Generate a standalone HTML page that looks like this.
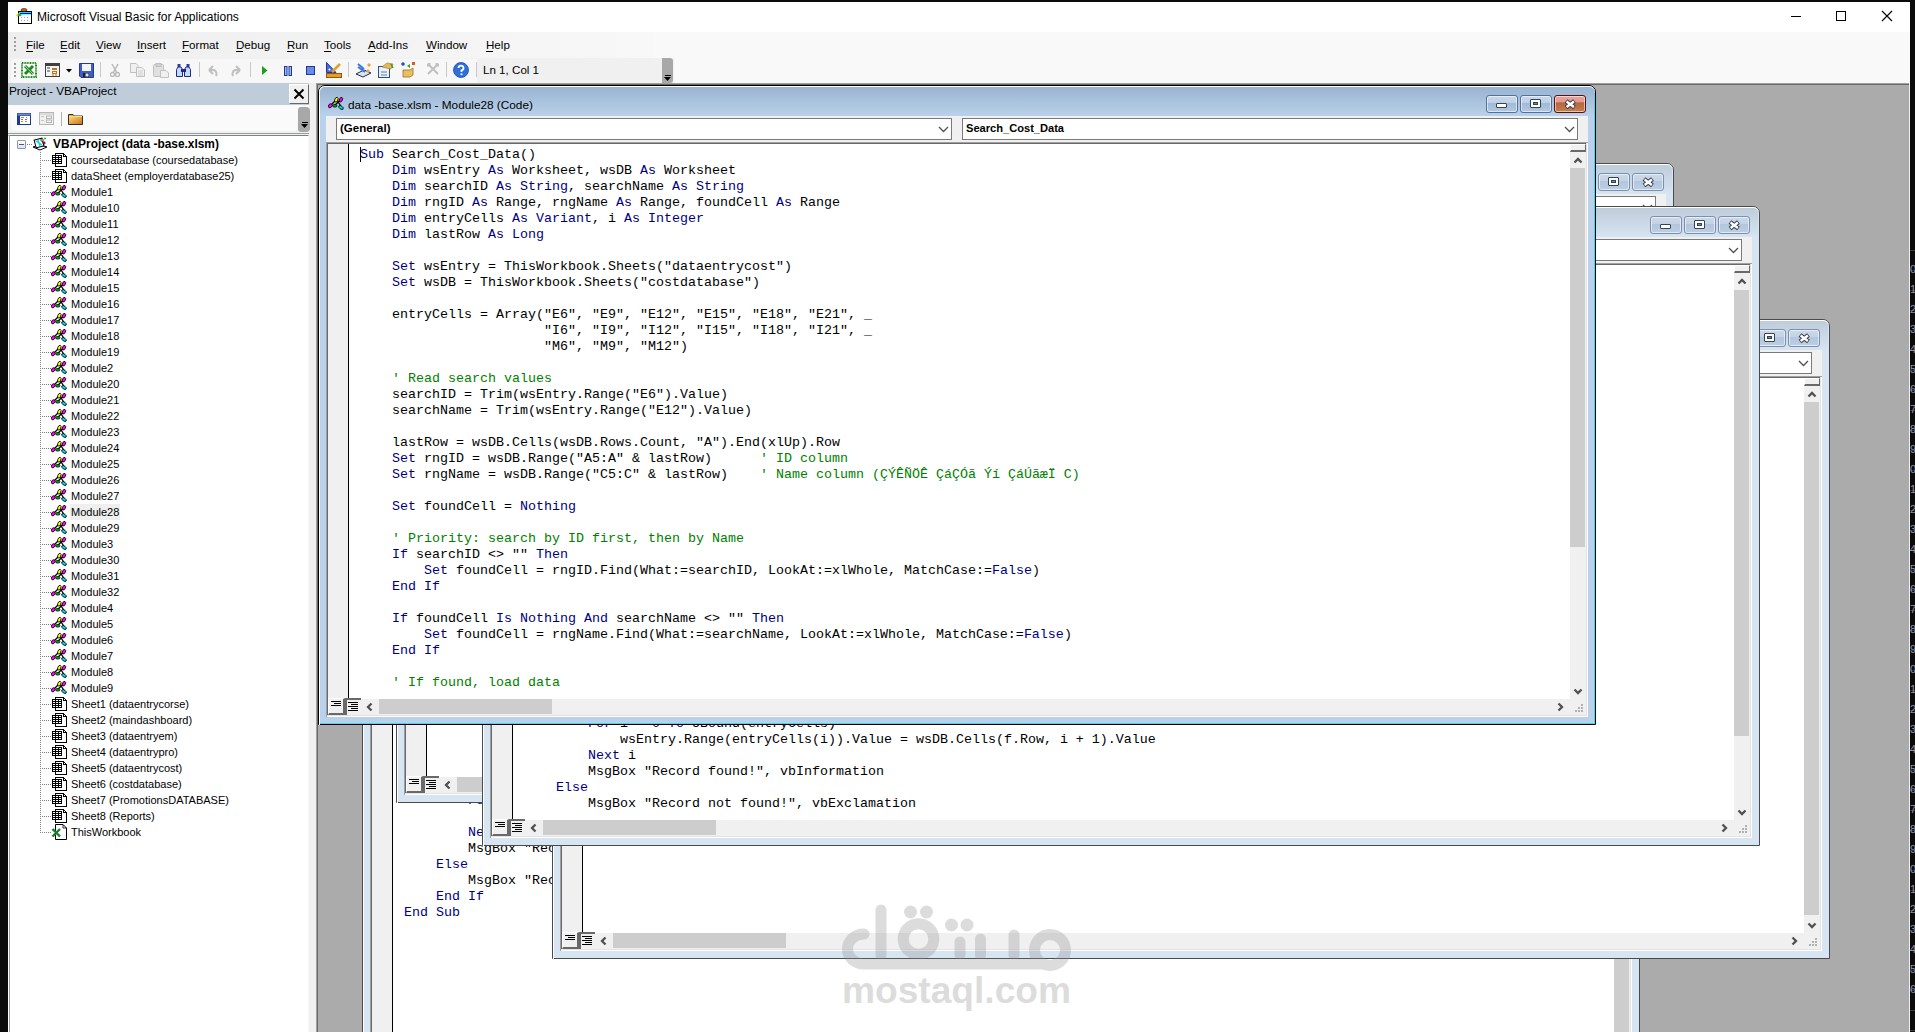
<!DOCTYPE html><html><head><meta charset="utf-8"><style>*{box-sizing:border-box}body{margin:0;width:1915px;height:1032px;overflow:hidden;position:relative;background:#0b0b0b;font-family:"Liberation Sans",sans-serif}div{box-sizing:border-box}</style></head><body><div style="position:absolute;left:8px;top:2px;width:1902px;height:30px;background:#fff"></div><div style="position:absolute;left:37px;top:10px;height:14px;font-family:'Liberation Sans', sans-serif;font-size:12px;font-weight:400;line-height:14px;color:#000;white-space:pre;">Microsoft Visual Basic for Applications</div><svg style="position:absolute;left:16px;top:8px" width="16" height="16"><rect x="2.5" y="3.5" width="13" height="12" fill="#fff" stroke="#000"/><rect x="3" y="4" width="12" height="2.5" fill="#00e8ff"/><path d="M3 5.5H15" stroke="#0000c0"/><g fill="#a0a0a0"><rect x="5" y="9" width="1" height="1"/><rect x="8" y="9" width="1" height="1"/><rect x="11" y="9" width="1" height="1"/><rect x="5" y="12" width="1" height="1"/><rect x="8" y="12" width="1" height="1"/><rect x="11" y="12" width="1" height="1"/></g><ellipse cx="8" cy="2" rx="3" ry="1.6" fill="#c06010" stroke="#000" stroke-width="0.5"/><path d="M0.5 8L4 5.5" stroke="#e8e000" stroke-width="2"/><ellipse cx="3.5" cy="7" rx="2" ry="1.2" fill="#40a040"/></svg><div style="position:absolute;left:1791px;top:16px;width:10px;height:1px;background:#000"></div><div style="position:absolute;left:1836px;top:11px;width:10px;height:10px;border:1px solid #000"></div><svg style="position:absolute;left:1881px;top:10px" width="12" height="12"><path d="M1 1L11 11M11 1L1 11" stroke="#000" stroke-width="1.1"/></svg><div style="position:absolute;left:8px;top:32px;width:1902px;height:51px;background:#f9f9f9"></div><div style="position:absolute;left:8px;top:32px;width:645px;height:26px;background:linear-gradient(90deg,#eeeeee,#f3f3f3 60%,#f8f8f8)"></div><div style="position:absolute;left:8px;top:58px;width:666px;height:25px;background:#f0f0f0"></div><div style="position:absolute;left:11px;top:59px;width:651px;height:24px;background:#f7f7f7;border-radius:3px"></div><div style="position:absolute;left:14px;top:37px;width:2px;height:2px;background:#a0a0a0"></div><div style="position:absolute;left:14px;top:41px;width:2px;height:2px;background:#a0a0a0"></div><div style="position:absolute;left:14px;top:45px;width:2px;height:2px;background:#a0a0a0"></div><div style="position:absolute;left:14px;top:49px;width:2px;height:2px;background:#a0a0a0"></div><div style="position:absolute;left:14px;top:63px;width:2px;height:2px;background:#a0a0a0"></div><div style="position:absolute;left:14px;top:67px;width:2px;height:2px;background:#a0a0a0"></div><div style="position:absolute;left:14px;top:71px;width:2px;height:2px;background:#a0a0a0"></div><div style="position:absolute;left:14px;top:75px;width:2px;height:2px;background:#a0a0a0"></div><div style="position:absolute;left:477px;top:59px;width:185px;height:24px;background:#f0f0f0"></div><div style="position:absolute;left:483px;top:63px;height:14px;font-family:'Liberation Sans', sans-serif;font-size:11.6px;font-weight:400;line-height:14px;color:#000;white-space:pre;">Ln 1, Col 1</div><div style="position:absolute;left:662px;top:58px;width:11px;height:25px;background:#a8a8a8;border-radius:0 3px 3px 0"></div><div style="position:absolute;left:665px;top:75px;width:6px;height:1px;background:#000"></div><svg style="position:absolute;left:664px;top:77px" width="8" height="5"><path d="M0 0H7L3.5 4Z" fill="#000"/></svg><div style="position:absolute;left:26px;top:38px;height:14px;font-family:'Liberation Sans', sans-serif;font-size:11.6px;font-weight:400;line-height:14px;color:#000;white-space:pre;">File</div><div style="position:absolute;left:26px;top:51px;width:7px;height:1px;background:#000"></div><div style="position:absolute;left:60px;top:38px;height:14px;font-family:'Liberation Sans', sans-serif;font-size:11.6px;font-weight:400;line-height:14px;color:#000;white-space:pre;">Edit</div><div style="position:absolute;left:60px;top:51px;width:7px;height:1px;background:#000"></div><div style="position:absolute;left:96px;top:38px;height:14px;font-family:'Liberation Sans', sans-serif;font-size:11.6px;font-weight:400;line-height:14px;color:#000;white-space:pre;">View</div><div style="position:absolute;left:96px;top:51px;width:7px;height:1px;background:#000"></div><div style="position:absolute;left:137px;top:38px;height:14px;font-family:'Liberation Sans', sans-serif;font-size:11.6px;font-weight:400;line-height:14px;color:#000;white-space:pre;">Insert</div><div style="position:absolute;left:137px;top:51px;width:7px;height:1px;background:#000"></div><div style="position:absolute;left:182px;top:38px;height:14px;font-family:'Liberation Sans', sans-serif;font-size:11.6px;font-weight:400;line-height:14px;color:#000;white-space:pre;">Format</div><div style="position:absolute;left:182px;top:51px;width:7px;height:1px;background:#000"></div><div style="position:absolute;left:236px;top:38px;height:14px;font-family:'Liberation Sans', sans-serif;font-size:11.6px;font-weight:400;line-height:14px;color:#000;white-space:pre;">Debug</div><div style="position:absolute;left:236px;top:51px;width:7px;height:1px;background:#000"></div><div style="position:absolute;left:287px;top:38px;height:14px;font-family:'Liberation Sans', sans-serif;font-size:11.6px;font-weight:400;line-height:14px;color:#000;white-space:pre;">Run</div><div style="position:absolute;left:287px;top:51px;width:7px;height:1px;background:#000"></div><div style="position:absolute;left:324px;top:38px;height:14px;font-family:'Liberation Sans', sans-serif;font-size:11.6px;font-weight:400;line-height:14px;color:#000;white-space:pre;">Tools</div><div style="position:absolute;left:324px;top:51px;width:7px;height:1px;background:#000"></div><div style="position:absolute;left:368px;top:38px;height:14px;font-family:'Liberation Sans', sans-serif;font-size:11.6px;font-weight:400;line-height:14px;color:#000;white-space:pre;">Add-Ins</div><div style="position:absolute;left:368px;top:51px;width:7px;height:1px;background:#000"></div><div style="position:absolute;left:426px;top:38px;height:14px;font-family:'Liberation Sans', sans-serif;font-size:11.6px;font-weight:400;line-height:14px;color:#000;white-space:pre;">Window</div><div style="position:absolute;left:426px;top:51px;width:7px;height:1px;background:#000"></div><div style="position:absolute;left:486px;top:38px;height:14px;font-family:'Liberation Sans', sans-serif;font-size:11.6px;font-weight:400;line-height:14px;color:#000;white-space:pre;">Help</div><div style="position:absolute;left:486px;top:51px;width:7px;height:1px;background:#000"></div><svg style="position:absolute;left:21px;top:62px" width="16" height="16" viewBox="0 0 16 16"><rect x="1" y="1" width="14" height="14" fill="#fff" stroke="#1a8a1a" stroke-width="2" stroke-dasharray="1 0.6"/><path d="M4 4L12 12M12 4L4 12" stroke="#1a8a1a" stroke-width="3"/><path d="M4 4L12 12" stroke="#c8f0c8" stroke-width="0.8"/></svg><svg style="position:absolute;left:45px;top:63px" width="15" height="14" viewBox="0 0 15 14"><rect x="0.5" y="0.5" width="14" height="13" fill="#f4f4f4" stroke="#404040"/><rect x="1" y="1" width="13" height="2" fill="#404040"/><path d="M2 5H5M2 8H5" stroke="#404040"/><rect x="7" y="5" width="5" height="2" fill="#d07010"/><rect x="7.5" y="8.5" width="4" height="2" fill="none" stroke="#d07010"/><path d="M7 12H9M10 12H12" stroke="#d07010"/></svg><svg style="position:absolute;left:66px;top:69px" width="6" height="4" viewBox="0 0 6 4"><path d="M0 0H6L3 3.5Z" fill="#000"/></svg><svg style="position:absolute;left:79px;top:63px" width="15" height="15" viewBox="0 0 15 15"><path d="M0.5 0.5H14.5V14.5H2L0.5 13Z" fill="#3c5cc8" stroke="#2a3a8a"/><rect x="3" y="1" width="9" height="7" fill="#f0f4ff"/><rect x="4" y="10" width="6" height="4" fill="#202020"/><rect x="6.5" y="10.5" width="3" height="3" fill="#e0e0e0"/></svg><div style="position:absolute;left:100px;top:62px;width:1px;height:15px;background:#c8c8c8"></div><div style="position:absolute;left:199px;top:62px;width:1px;height:15px;background:#c8c8c8"></div><div style="position:absolute;left:250px;top:62px;width:1px;height:15px;background:#c8c8c8"></div><div style="position:absolute;left:348px;top:62px;width:1px;height:15px;background:#c8c8c8"></div><div style="position:absolute;left:446px;top:62px;width:1px;height:15px;background:#c8c8c8"></div><div style="position:absolute;left:476px;top:62px;width:1px;height:15px;background:#c8c8c8"></div><svg style="position:absolute;left:110px;top:63px" width="10" height="14" viewBox="0 0 10 14"><path d="M2 1L7 10M8 1L3 10" stroke="#b8b8b8" stroke-width="1.5"/><circle cx="2.5" cy="11.5" r="2" fill="none" stroke="#b8b8b8" stroke-width="1.3"/><circle cx="7.5" cy="11.5" r="2" fill="none" stroke="#b8b8b8" stroke-width="1.3"/></svg><svg style="position:absolute;left:130px;top:63px" width="15" height="14" viewBox="0 0 15 14"><path d="M0.5 0.5H6L8 2.5V9.5H0.5Z" fill="#f0f0f0" stroke="#c0c0c0"/><path d="M6.5 4.5H12L14.5 7V13.5H6.5Z" fill="#f0f0f0" stroke="#c0c0c0"/><path d="M8 8H13M8 10H13M8 12H13" stroke="#d0d0d0"/></svg><svg style="position:absolute;left:153px;top:63px" width="16" height="15" viewBox="0 0 16 15"><rect x="0.5" y="1.5" width="10" height="12" rx="1" fill="#e0e0e0" stroke="#c0c0c0"/><rect x="3" y="0.5" width="5" height="3" fill="#d0d0d0" stroke="#c0c0c0"/><path d="M7.5 7.5H13L15.5 10V14.5H7.5Z" fill="#f0f0f0" stroke="#c0c0c0"/></svg><svg style="position:absolute;left:176px;top:63px" width="15" height="14" viewBox="0 0 15 14"><rect x="1.5" y="1" width="3" height="3" fill="#3040a0"/><rect x="10.5" y="1" width="3" height="3" fill="#3040a0"/><path d="M0.5 6.5L2 4H5L6.5 6.5V13.5H0.5Z" fill="#c8d8f8" stroke="#1a2a8a"/><path d="M8.5 6.5L10 4H13L14.5 6.5V13.5H8.5Z" fill="#c8d8f8" stroke="#1a2a8a"/><rect x="5" y="6" width="5" height="3" fill="#1a2a8a"/></svg><svg style="position:absolute;left:207px;top:63px" width="13" height="14" viewBox="0 0 13 14"><path d="M2 7L6 11M2 7L6 3M2 7H7A4.5 4.5 0 0 1 9 13" stroke="#c0c0c0" stroke-width="2.2" fill="none"/></svg><svg style="position:absolute;left:229px;top:63px" width="13" height="14" viewBox="0 0 13 14"><path d="M11 7L7 11M11 7L7 3M11 7H6A4.5 4.5 0 0 0 4 13" stroke="#c0c0c0" stroke-width="2.2" fill="none"/></svg><svg style="position:absolute;left:262px;top:66px" width="6" height="9" viewBox="0 0 6 9"><path d="M0 0L5.5 4.5L0 9Z" fill="#18a018"/></svg><svg style="position:absolute;left:284px;top:66px" width="8" height="10" viewBox="0 0 8 10"><rect x="0.5" y="0.5" width="2.5" height="9" fill="#a0b8f0" stroke="#1a3aa0"/><rect x="5" y="0.5" width="2.5" height="9" fill="#a0b8f0" stroke="#1a3aa0"/></svg><svg style="position:absolute;left:306px;top:66px" width="9" height="9" viewBox="0 0 9 9"><rect x="0.5" y="0.5" width="8" height="8" fill="#6a8ae8" stroke="#1a3aa0"/></svg><svg style="position:absolute;left:326px;top:62px" width="16" height="16" viewBox="0 0 16 16"><path d="M0.5 0.5L10 10.5H0.5Z" fill="#4a6ad8" stroke="#1a3aa0"/><circle cx="3.5" cy="7.5" r="1" fill="#fff"/><path d="M6 10L14 2" stroke="#e0a030" stroke-width="2.5"/><rect x="0.5" y="11.5" width="15" height="4" fill="#e0a020" stroke="#a05010"/></svg><svg style="position:absolute;left:355px;top:62px" width="17" height="17" viewBox="0 0 17 17"><path d="M1 12L8 15L16 11L9 8Z" fill="#d8e4f4" stroke="#203050"/><path d="M3 2L9 7M3 5L10 10" stroke="#3a7ad8" stroke-width="2"/><path d="M14 1L16 3L14 5L12 3ZM13 7L15 9L13 11L11 9Z" fill="#f0a040"/></svg><svg style="position:absolute;left:378px;top:62px" width="16" height="16" viewBox="0 0 16 16"><rect x="0.5" y="4.5" width="11" height="11" fill="#e8f0fa" stroke="#305080"/><path d="M3 10H9M3 13H9" stroke="#6080b0"/><path d="M4 5L9 1L15 2L13 7Z" fill="#e8b850" stroke="#a07020" stroke-width="0.6"/><path d="M13 2L15 6" stroke="#30a030" stroke-width="1.5"/></svg><svg style="position:absolute;left:401px;top:62px" width="16" height="16" viewBox="0 0 16 16"><circle cx="2" cy="2" r="1.8" fill="#2050c0"/><path d="M6 4L9 2V6Z" fill="#30a030"/><rect x="11" y="0" width="3" height="3" fill="#d06020"/><path d="M2 8L9 8L12 6V13L9 15H2Z" fill="#e8c060" stroke="#a07020" stroke-width="0.8"/></svg><svg style="position:absolute;left:427px;top:63px" width="12" height="12" viewBox="0 0 12 12"><path d="M1 11L10 2M2 2L11 11" stroke="#c0c0c0" stroke-width="2"/><path d="M0 3L3 0M9 0L12 3" stroke="#c0c0c0" stroke-width="2.5"/></svg><svg style="position:absolute;left:453px;top:62px" width="16" height="16" viewBox="0 0 16 16"><circle cx="8" cy="8" r="7.5" fill="#2f6fd8" stroke="#1a4aa8" stroke-width="0.8"/><path d="M5.5 6A2.5 2.5 0 1 1 8.5 8.5V10" stroke="#fff" stroke-width="1.8" fill="none"/><circle cx="8.5" cy="12.3" r="1" fill="#fff"/></svg><div style="position:absolute;left:309px;top:83px;width:7px;height:949px;background:#f0f0f0"></div><div style="position:absolute;left:316px;top:83px;width:1594px;height:949px;background:#ababab"></div><div style="position:absolute;left:316px;top:83px;width:1594px;height:1px;background:#a0a0a0"></div><div style="position:absolute;left:316px;top:84px;width:1594px;height:1px;background:#696969"></div><div style="position:absolute;left:316px;top:83px;width:1px;height:949px;background:#a0a0a0"></div><div style="position:absolute;left:317px;top:84px;width:1px;height:948px;background:#696969"></div><div style="position:absolute;left:8px;top:83px;width:304px;height:949px;background:#f0f0f0"></div><div style="position:absolute;left:8px;top:83px;width:301px;height:22px;background:#bfcddb"></div><div style="position:absolute;left:9px;top:84px;height:14px;font-family:'Liberation Sans', sans-serif;font-size:11.8px;font-weight:400;line-height:14px;color:#000;white-space:pre;">Project - VBAProject</div><div style="position:absolute;left:289px;top:84px;width:20px;height:20px;background:#f0f0f0;border:1px solid;border-color:#fff #696969 #696969 #fff"></div><svg style="position:absolute;left:293px;top:88px" width="12" height="12"><path d="M1.5 1.5L10.5 10.5M10.5 1.5L1.5 10.5" stroke="#000" stroke-width="2"/></svg><div style="position:absolute;left:8px;top:105px;width:301px;height:27px;background:linear-gradient(#fbfbfb,#f0f0f0)"></div><div style="position:absolute;left:11px;top:107px;width:286px;height:24px;background:#fafafa;border-radius:3px"></div><div style="position:absolute;left:298px;top:107px;width:12px;height:25px;background:#a8a8a8;border-radius:3px 4px 4px 3px"></div><div style="position:absolute;left:302px;top:122px;width:6px;height:1px;background:#000"></div><svg style="position:absolute;left:301px;top:124px" width="8" height="5"><path d="M0 0H7L3.5 4Z" fill="#000"/></svg><svg style="position:absolute;left:17px;top:113px" width="14" height="12" viewBox="0 0 14 12"><rect x="0" y="0" width="14" height="12" fill="#1a3a8a"/><rect x="0.5" y="0.5" width="13" height="2" fill="#6a8ae8"/><rect x="3" y="3" width="10" height="8" fill="#fff"/><path d="M4 4.5H7M9 4.5H10M4 8.5H6M8 8.5H10" stroke="#e08020" stroke-width="1"/><path d="M4 6.5H6M8 6.5H10" stroke="#6080a0"/></svg><svg style="position:absolute;left:39px;top:112px" width="15" height="13" viewBox="0 0 15 13"><rect x="0.5" y="0.5" width="14" height="12" fill="#f0f0f0" stroke="#b8b8b8"/><path d="M1 2H14" stroke="#c8c8c8"/><rect x="7.5" y="4" width="5" height="2.5" fill="none" stroke="#b8b8b8"/><rect x="7.5" y="8" width="5" height="2.5" fill="none" stroke="#b8b8b8"/><path d="M2 4.5H5M2 8.5H5" stroke="#c8c8c8"/></svg><div style="position:absolute;left:61px;top:112px;width:1px;height:14px;background:#b0b0b0"></div><svg style="position:absolute;left:68px;top:113px" width="15" height="12" viewBox="0 0 15 12"><path d="M0.5 1.5H5L6.5 3H14.5V11.5H0.5Z" fill="#e8a040" stroke="#303030"/><path d="M1 3.5H14" stroke="#f8e080"/><rect x="1" y="4" width="13" height="7" fill="url(#fg)"/><defs><linearGradient id="fg" x1="0" y1="0" x2="1" y2="1"><stop offset="0" stop-color="#f8d870"/><stop offset="1" stop-color="#d07020"/></linearGradient></defs></svg><div style="position:absolute;left:8px;top:133px;width:301px;height:1px;background:#8fa0a0"></div><div style="position:absolute;left:8px;top:135px;width:301px;height:897px;background:#fff;border-left:1px solid #fff;border-top:1px solid #808080;border-right:1px solid #f8f8f8"></div><div style="position:absolute;left:9px;top:135px;width:1px;height:897px;background:#a0a0a0"></div><svg width="0" height="0" style="position:absolute"><defs><symbol id="sheet" viewBox="0 0 16 16" shape-rendering="crispEdges"><path d="M3.5 0.5H11.5L14.5 3.5V13.5H3.5Z" fill="#fff" stroke="#000"/><path d="M11.5 0.5V3.5H14.5" fill="none" stroke="#000"/><rect x="0" y="2" width="10" height="9" fill="#000"/><g fill="#fff"><rect x="1" y="3" width="2" height="1"/><rect x="4" y="3" width="2" height="1"/><rect x="7" y="3" width="2" height="1"/><rect x="1" y="5" width="2" height="1"/><rect x="4" y="5" width="2" height="1"/><rect x="7" y="5" width="2" height="1"/><rect x="1" y="7" width="2" height="1"/><rect x="4" y="7" width="2" height="1"/><rect x="7" y="7" width="2" height="1"/><rect x="1" y="9" width="2" height="1"/><rect x="4" y="9" width="2" height="1"/><rect x="7" y="9" width="2" height="1"/></g></symbol><symbol id="mod" viewBox="0 0 16 16"><path d="M2 10L8.5 3.5L14 12M13 3.5L6 10" stroke="#000" stroke-width="1.3" fill="none"/><ellipse cx="2.2" cy="9.8" rx="1.7" ry="2.2" fill="#ff00ff" stroke="#000" stroke-width="0.8" transform="rotate(45 2.2 9.8)"/><ellipse cx="6.8" cy="9.8" rx="2.2" ry="1.3" fill="#00b000" stroke="#000" stroke-width="0.8"/><ellipse cx="13" cy="11.5" rx="2.6" ry="1.5" fill="#00e0e0" stroke="#000" stroke-width="0.8" transform="rotate(35 13 11.5)"/><ellipse cx="8.3" cy="3.7" rx="1.5" ry="2.5" fill="#ffff00" stroke="#000" stroke-width="0.8" transform="rotate(25 8.3 3.7)"/><ellipse cx="12.9" cy="3.7" rx="1.5" ry="2.5" fill="#ff00ff" stroke="#000" stroke-width="0.8" transform="rotate(25 12.9 3.7)"/></symbol><symbol id="wb" viewBox="0 0 16 16"><path d="M4.5 0.5H12L15.5 4V15.5H4.5Z" fill="#fff" stroke="#000"/><path d="M12 0.5V4H15.5" fill="none" stroke="#000" stroke-width="0.8"/><path d="M1.5 5L9 12.5M9 5L1.5 12.5" stroke="#1d7a2e" stroke-width="2.4"/></symbol></defs></svg><div style="position:absolute;left:17px;top:140px;width:9px;height:9px;background:linear-gradient(#fff,#e2e2e2);border:1px solid #8a97a5;border-radius:1px"><div style="position:absolute;left:1px;top:3px;width:5px;height:1px;background:#3b5a9a"></div></div><div style="position:absolute;left:27px;top:144px;width:5px;height:1px;background:repeating-linear-gradient(90deg,#808080 0 1px,transparent 1px 2px)"></div><svg style="position:absolute;left:32px;top:137px" width="16" height="14"><path d="M1 10L8 13L15 10L8 8Z" fill="#fff" stroke="#000"/><rect x="3" y="2" width="8" height="8" fill="#fff" stroke="#000" transform="rotate(-15 7 6)"/><path d="M4 4L10 8M6 3L8 9" stroke="#00d8e8" stroke-width="1.5"/><circle cx="10" cy="3" r="1.3" fill="#ff0" stroke="#000" stroke-width="0.6"/><circle cx="12" cy="6" r="1.2" fill="#f0f" stroke="#000" stroke-width="0.6"/><circle cx="13" cy="1.5" r="1" fill="#0c0"/></svg><div style="position:absolute;left:53px;top:136px;height:16px;font-family:'Liberation Sans', sans-serif;font-size:11.9px;font-weight:700;line-height:16px;color:#000;white-space:pre;">VBAProject (data -base.xlsm)</div><div style="position:absolute;left:40px;top:152px;width:1px;height:681px;background:repeating-linear-gradient(180deg,#808080 0 1px,transparent 1px 2px)"></div><div style="position:absolute;left:42px;top:160px;width:9px;height:1px;background:repeating-linear-gradient(90deg,#808080 0 1px,transparent 1px 2px)"></div><svg style="position:absolute;left:52px;top:153px" width="16" height="16"><use href="#sheet"/></svg><div style="position:absolute;left:71px;top:152px;height:16px;font-family:'Liberation Sans', sans-serif;font-size:11px;font-weight:400;line-height:16px;color:#000;white-space:pre;">coursedatabase (coursedatabase)</div><div style="position:absolute;left:42px;top:176px;width:9px;height:1px;background:repeating-linear-gradient(90deg,#808080 0 1px,transparent 1px 2px)"></div><svg style="position:absolute;left:52px;top:169px" width="16" height="16"><use href="#sheet"/></svg><div style="position:absolute;left:71px;top:168px;height:16px;font-family:'Liberation Sans', sans-serif;font-size:11px;font-weight:400;line-height:16px;color:#000;white-space:pre;">dataSheet (employerdatabase25)</div><div style="position:absolute;left:42px;top:192px;width:9px;height:1px;background:repeating-linear-gradient(90deg,#808080 0 1px,transparent 1px 2px)"></div><svg style="position:absolute;left:51px;top:184px" width="16" height="16"><use href="#mod"/></svg><div style="position:absolute;left:71px;top:184px;height:16px;font-family:'Liberation Sans', sans-serif;font-size:11px;font-weight:400;line-height:16px;color:#000;white-space:pre;">Module1</div><div style="position:absolute;left:42px;top:208px;width:9px;height:1px;background:repeating-linear-gradient(90deg,#808080 0 1px,transparent 1px 2px)"></div><svg style="position:absolute;left:51px;top:200px" width="16" height="16"><use href="#mod"/></svg><div style="position:absolute;left:71px;top:200px;height:16px;font-family:'Liberation Sans', sans-serif;font-size:11px;font-weight:400;line-height:16px;color:#000;white-space:pre;">Module10</div><div style="position:absolute;left:42px;top:224px;width:9px;height:1px;background:repeating-linear-gradient(90deg,#808080 0 1px,transparent 1px 2px)"></div><svg style="position:absolute;left:51px;top:216px" width="16" height="16"><use href="#mod"/></svg><div style="position:absolute;left:71px;top:216px;height:16px;font-family:'Liberation Sans', sans-serif;font-size:11px;font-weight:400;line-height:16px;color:#000;white-space:pre;">Module11</div><div style="position:absolute;left:42px;top:240px;width:9px;height:1px;background:repeating-linear-gradient(90deg,#808080 0 1px,transparent 1px 2px)"></div><svg style="position:absolute;left:51px;top:232px" width="16" height="16"><use href="#mod"/></svg><div style="position:absolute;left:71px;top:232px;height:16px;font-family:'Liberation Sans', sans-serif;font-size:11px;font-weight:400;line-height:16px;color:#000;white-space:pre;">Module12</div><div style="position:absolute;left:42px;top:256px;width:9px;height:1px;background:repeating-linear-gradient(90deg,#808080 0 1px,transparent 1px 2px)"></div><svg style="position:absolute;left:51px;top:248px" width="16" height="16"><use href="#mod"/></svg><div style="position:absolute;left:71px;top:248px;height:16px;font-family:'Liberation Sans', sans-serif;font-size:11px;font-weight:400;line-height:16px;color:#000;white-space:pre;">Module13</div><div style="position:absolute;left:42px;top:272px;width:9px;height:1px;background:repeating-linear-gradient(90deg,#808080 0 1px,transparent 1px 2px)"></div><svg style="position:absolute;left:51px;top:264px" width="16" height="16"><use href="#mod"/></svg><div style="position:absolute;left:71px;top:264px;height:16px;font-family:'Liberation Sans', sans-serif;font-size:11px;font-weight:400;line-height:16px;color:#000;white-space:pre;">Module14</div><div style="position:absolute;left:42px;top:288px;width:9px;height:1px;background:repeating-linear-gradient(90deg,#808080 0 1px,transparent 1px 2px)"></div><svg style="position:absolute;left:51px;top:280px" width="16" height="16"><use href="#mod"/></svg><div style="position:absolute;left:71px;top:280px;height:16px;font-family:'Liberation Sans', sans-serif;font-size:11px;font-weight:400;line-height:16px;color:#000;white-space:pre;">Module15</div><div style="position:absolute;left:42px;top:304px;width:9px;height:1px;background:repeating-linear-gradient(90deg,#808080 0 1px,transparent 1px 2px)"></div><svg style="position:absolute;left:51px;top:296px" width="16" height="16"><use href="#mod"/></svg><div style="position:absolute;left:71px;top:296px;height:16px;font-family:'Liberation Sans', sans-serif;font-size:11px;font-weight:400;line-height:16px;color:#000;white-space:pre;">Module16</div><div style="position:absolute;left:42px;top:320px;width:9px;height:1px;background:repeating-linear-gradient(90deg,#808080 0 1px,transparent 1px 2px)"></div><svg style="position:absolute;left:51px;top:312px" width="16" height="16"><use href="#mod"/></svg><div style="position:absolute;left:71px;top:312px;height:16px;font-family:'Liberation Sans', sans-serif;font-size:11px;font-weight:400;line-height:16px;color:#000;white-space:pre;">Module17</div><div style="position:absolute;left:42px;top:336px;width:9px;height:1px;background:repeating-linear-gradient(90deg,#808080 0 1px,transparent 1px 2px)"></div><svg style="position:absolute;left:51px;top:328px" width="16" height="16"><use href="#mod"/></svg><div style="position:absolute;left:71px;top:328px;height:16px;font-family:'Liberation Sans', sans-serif;font-size:11px;font-weight:400;line-height:16px;color:#000;white-space:pre;">Module18</div><div style="position:absolute;left:42px;top:352px;width:9px;height:1px;background:repeating-linear-gradient(90deg,#808080 0 1px,transparent 1px 2px)"></div><svg style="position:absolute;left:51px;top:344px" width="16" height="16"><use href="#mod"/></svg><div style="position:absolute;left:71px;top:344px;height:16px;font-family:'Liberation Sans', sans-serif;font-size:11px;font-weight:400;line-height:16px;color:#000;white-space:pre;">Module19</div><div style="position:absolute;left:42px;top:368px;width:9px;height:1px;background:repeating-linear-gradient(90deg,#808080 0 1px,transparent 1px 2px)"></div><svg style="position:absolute;left:51px;top:360px" width="16" height="16"><use href="#mod"/></svg><div style="position:absolute;left:71px;top:360px;height:16px;font-family:'Liberation Sans', sans-serif;font-size:11px;font-weight:400;line-height:16px;color:#000;white-space:pre;">Module2</div><div style="position:absolute;left:42px;top:384px;width:9px;height:1px;background:repeating-linear-gradient(90deg,#808080 0 1px,transparent 1px 2px)"></div><svg style="position:absolute;left:51px;top:376px" width="16" height="16"><use href="#mod"/></svg><div style="position:absolute;left:71px;top:376px;height:16px;font-family:'Liberation Sans', sans-serif;font-size:11px;font-weight:400;line-height:16px;color:#000;white-space:pre;">Module20</div><div style="position:absolute;left:42px;top:400px;width:9px;height:1px;background:repeating-linear-gradient(90deg,#808080 0 1px,transparent 1px 2px)"></div><svg style="position:absolute;left:51px;top:392px" width="16" height="16"><use href="#mod"/></svg><div style="position:absolute;left:71px;top:392px;height:16px;font-family:'Liberation Sans', sans-serif;font-size:11px;font-weight:400;line-height:16px;color:#000;white-space:pre;">Module21</div><div style="position:absolute;left:42px;top:416px;width:9px;height:1px;background:repeating-linear-gradient(90deg,#808080 0 1px,transparent 1px 2px)"></div><svg style="position:absolute;left:51px;top:408px" width="16" height="16"><use href="#mod"/></svg><div style="position:absolute;left:71px;top:408px;height:16px;font-family:'Liberation Sans', sans-serif;font-size:11px;font-weight:400;line-height:16px;color:#000;white-space:pre;">Module22</div><div style="position:absolute;left:42px;top:432px;width:9px;height:1px;background:repeating-linear-gradient(90deg,#808080 0 1px,transparent 1px 2px)"></div><svg style="position:absolute;left:51px;top:424px" width="16" height="16"><use href="#mod"/></svg><div style="position:absolute;left:71px;top:424px;height:16px;font-family:'Liberation Sans', sans-serif;font-size:11px;font-weight:400;line-height:16px;color:#000;white-space:pre;">Module23</div><div style="position:absolute;left:42px;top:448px;width:9px;height:1px;background:repeating-linear-gradient(90deg,#808080 0 1px,transparent 1px 2px)"></div><svg style="position:absolute;left:51px;top:440px" width="16" height="16"><use href="#mod"/></svg><div style="position:absolute;left:71px;top:440px;height:16px;font-family:'Liberation Sans', sans-serif;font-size:11px;font-weight:400;line-height:16px;color:#000;white-space:pre;">Module24</div><div style="position:absolute;left:42px;top:464px;width:9px;height:1px;background:repeating-linear-gradient(90deg,#808080 0 1px,transparent 1px 2px)"></div><svg style="position:absolute;left:51px;top:456px" width="16" height="16"><use href="#mod"/></svg><div style="position:absolute;left:71px;top:456px;height:16px;font-family:'Liberation Sans', sans-serif;font-size:11px;font-weight:400;line-height:16px;color:#000;white-space:pre;">Module25</div><div style="position:absolute;left:42px;top:480px;width:9px;height:1px;background:repeating-linear-gradient(90deg,#808080 0 1px,transparent 1px 2px)"></div><svg style="position:absolute;left:51px;top:472px" width="16" height="16"><use href="#mod"/></svg><div style="position:absolute;left:71px;top:472px;height:16px;font-family:'Liberation Sans', sans-serif;font-size:11px;font-weight:400;line-height:16px;color:#000;white-space:pre;">Module26</div><div style="position:absolute;left:42px;top:496px;width:9px;height:1px;background:repeating-linear-gradient(90deg,#808080 0 1px,transparent 1px 2px)"></div><svg style="position:absolute;left:51px;top:488px" width="16" height="16"><use href="#mod"/></svg><div style="position:absolute;left:71px;top:488px;height:16px;font-family:'Liberation Sans', sans-serif;font-size:11px;font-weight:400;line-height:16px;color:#000;white-space:pre;">Module27</div><div style="position:absolute;left:42px;top:512px;width:9px;height:1px;background:repeating-linear-gradient(90deg,#808080 0 1px,transparent 1px 2px)"></div><svg style="position:absolute;left:51px;top:504px" width="16" height="16"><use href="#mod"/></svg><div style="position:absolute;left:70px;top:504px;width:50px;height:16px;background:#efefef"></div><div style="position:absolute;left:71px;top:504px;height:16px;font-family:'Liberation Sans', sans-serif;font-size:11px;font-weight:400;line-height:16px;color:#000;white-space:pre;">Module28</div><div style="position:absolute;left:42px;top:528px;width:9px;height:1px;background:repeating-linear-gradient(90deg,#808080 0 1px,transparent 1px 2px)"></div><svg style="position:absolute;left:51px;top:520px" width="16" height="16"><use href="#mod"/></svg><div style="position:absolute;left:71px;top:520px;height:16px;font-family:'Liberation Sans', sans-serif;font-size:11px;font-weight:400;line-height:16px;color:#000;white-space:pre;">Module29</div><div style="position:absolute;left:42px;top:544px;width:9px;height:1px;background:repeating-linear-gradient(90deg,#808080 0 1px,transparent 1px 2px)"></div><svg style="position:absolute;left:51px;top:536px" width="16" height="16"><use href="#mod"/></svg><div style="position:absolute;left:71px;top:536px;height:16px;font-family:'Liberation Sans', sans-serif;font-size:11px;font-weight:400;line-height:16px;color:#000;white-space:pre;">Module3</div><div style="position:absolute;left:42px;top:560px;width:9px;height:1px;background:repeating-linear-gradient(90deg,#808080 0 1px,transparent 1px 2px)"></div><svg style="position:absolute;left:51px;top:552px" width="16" height="16"><use href="#mod"/></svg><div style="position:absolute;left:71px;top:552px;height:16px;font-family:'Liberation Sans', sans-serif;font-size:11px;font-weight:400;line-height:16px;color:#000;white-space:pre;">Module30</div><div style="position:absolute;left:42px;top:576px;width:9px;height:1px;background:repeating-linear-gradient(90deg,#808080 0 1px,transparent 1px 2px)"></div><svg style="position:absolute;left:51px;top:568px" width="16" height="16"><use href="#mod"/></svg><div style="position:absolute;left:71px;top:568px;height:16px;font-family:'Liberation Sans', sans-serif;font-size:11px;font-weight:400;line-height:16px;color:#000;white-space:pre;">Module31</div><div style="position:absolute;left:42px;top:592px;width:9px;height:1px;background:repeating-linear-gradient(90deg,#808080 0 1px,transparent 1px 2px)"></div><svg style="position:absolute;left:51px;top:584px" width="16" height="16"><use href="#mod"/></svg><div style="position:absolute;left:71px;top:584px;height:16px;font-family:'Liberation Sans', sans-serif;font-size:11px;font-weight:400;line-height:16px;color:#000;white-space:pre;">Module32</div><div style="position:absolute;left:42px;top:608px;width:9px;height:1px;background:repeating-linear-gradient(90deg,#808080 0 1px,transparent 1px 2px)"></div><svg style="position:absolute;left:51px;top:600px" width="16" height="16"><use href="#mod"/></svg><div style="position:absolute;left:71px;top:600px;height:16px;font-family:'Liberation Sans', sans-serif;font-size:11px;font-weight:400;line-height:16px;color:#000;white-space:pre;">Module4</div><div style="position:absolute;left:42px;top:624px;width:9px;height:1px;background:repeating-linear-gradient(90deg,#808080 0 1px,transparent 1px 2px)"></div><svg style="position:absolute;left:51px;top:616px" width="16" height="16"><use href="#mod"/></svg><div style="position:absolute;left:71px;top:616px;height:16px;font-family:'Liberation Sans', sans-serif;font-size:11px;font-weight:400;line-height:16px;color:#000;white-space:pre;">Module5</div><div style="position:absolute;left:42px;top:640px;width:9px;height:1px;background:repeating-linear-gradient(90deg,#808080 0 1px,transparent 1px 2px)"></div><svg style="position:absolute;left:51px;top:632px" width="16" height="16"><use href="#mod"/></svg><div style="position:absolute;left:71px;top:632px;height:16px;font-family:'Liberation Sans', sans-serif;font-size:11px;font-weight:400;line-height:16px;color:#000;white-space:pre;">Module6</div><div style="position:absolute;left:42px;top:656px;width:9px;height:1px;background:repeating-linear-gradient(90deg,#808080 0 1px,transparent 1px 2px)"></div><svg style="position:absolute;left:51px;top:648px" width="16" height="16"><use href="#mod"/></svg><div style="position:absolute;left:71px;top:648px;height:16px;font-family:'Liberation Sans', sans-serif;font-size:11px;font-weight:400;line-height:16px;color:#000;white-space:pre;">Module7</div><div style="position:absolute;left:42px;top:672px;width:9px;height:1px;background:repeating-linear-gradient(90deg,#808080 0 1px,transparent 1px 2px)"></div><svg style="position:absolute;left:51px;top:664px" width="16" height="16"><use href="#mod"/></svg><div style="position:absolute;left:71px;top:664px;height:16px;font-family:'Liberation Sans', sans-serif;font-size:11px;font-weight:400;line-height:16px;color:#000;white-space:pre;">Module8</div><div style="position:absolute;left:42px;top:688px;width:9px;height:1px;background:repeating-linear-gradient(90deg,#808080 0 1px,transparent 1px 2px)"></div><svg style="position:absolute;left:51px;top:680px" width="16" height="16"><use href="#mod"/></svg><div style="position:absolute;left:71px;top:680px;height:16px;font-family:'Liberation Sans', sans-serif;font-size:11px;font-weight:400;line-height:16px;color:#000;white-space:pre;">Module9</div><div style="position:absolute;left:42px;top:704px;width:9px;height:1px;background:repeating-linear-gradient(90deg,#808080 0 1px,transparent 1px 2px)"></div><svg style="position:absolute;left:52px;top:697px" width="16" height="16"><use href="#sheet"/></svg><div style="position:absolute;left:71px;top:696px;height:16px;font-family:'Liberation Sans', sans-serif;font-size:11px;font-weight:400;line-height:16px;color:#000;white-space:pre;">Sheet1 (dataentrycorse)</div><div style="position:absolute;left:42px;top:720px;width:9px;height:1px;background:repeating-linear-gradient(90deg,#808080 0 1px,transparent 1px 2px)"></div><svg style="position:absolute;left:52px;top:713px" width="16" height="16"><use href="#sheet"/></svg><div style="position:absolute;left:71px;top:712px;height:16px;font-family:'Liberation Sans', sans-serif;font-size:11px;font-weight:400;line-height:16px;color:#000;white-space:pre;">Sheet2 (maindashboard)</div><div style="position:absolute;left:42px;top:736px;width:9px;height:1px;background:repeating-linear-gradient(90deg,#808080 0 1px,transparent 1px 2px)"></div><svg style="position:absolute;left:52px;top:729px" width="16" height="16"><use href="#sheet"/></svg><div style="position:absolute;left:71px;top:728px;height:16px;font-family:'Liberation Sans', sans-serif;font-size:11px;font-weight:400;line-height:16px;color:#000;white-space:pre;">Sheet3 (dataentryem)</div><div style="position:absolute;left:42px;top:752px;width:9px;height:1px;background:repeating-linear-gradient(90deg,#808080 0 1px,transparent 1px 2px)"></div><svg style="position:absolute;left:52px;top:745px" width="16" height="16"><use href="#sheet"/></svg><div style="position:absolute;left:71px;top:744px;height:16px;font-family:'Liberation Sans', sans-serif;font-size:11px;font-weight:400;line-height:16px;color:#000;white-space:pre;">Sheet4 (dataentrypro)</div><div style="position:absolute;left:42px;top:768px;width:9px;height:1px;background:repeating-linear-gradient(90deg,#808080 0 1px,transparent 1px 2px)"></div><svg style="position:absolute;left:52px;top:761px" width="16" height="16"><use href="#sheet"/></svg><div style="position:absolute;left:71px;top:760px;height:16px;font-family:'Liberation Sans', sans-serif;font-size:11px;font-weight:400;line-height:16px;color:#000;white-space:pre;">Sheet5 (dataentrycost)</div><div style="position:absolute;left:42px;top:784px;width:9px;height:1px;background:repeating-linear-gradient(90deg,#808080 0 1px,transparent 1px 2px)"></div><svg style="position:absolute;left:52px;top:777px" width="16" height="16"><use href="#sheet"/></svg><div style="position:absolute;left:71px;top:776px;height:16px;font-family:'Liberation Sans', sans-serif;font-size:11px;font-weight:400;line-height:16px;color:#000;white-space:pre;">Sheet6 (costdatabase)</div><div style="position:absolute;left:42px;top:800px;width:9px;height:1px;background:repeating-linear-gradient(90deg,#808080 0 1px,transparent 1px 2px)"></div><svg style="position:absolute;left:52px;top:793px" width="16" height="16"><use href="#sheet"/></svg><div style="position:absolute;left:71px;top:792px;height:16px;font-family:'Liberation Sans', sans-serif;font-size:11px;font-weight:400;line-height:16px;color:#000;white-space:pre;">Sheet7 (PromotionsDATABASE)</div><div style="position:absolute;left:42px;top:816px;width:9px;height:1px;background:repeating-linear-gradient(90deg,#808080 0 1px,transparent 1px 2px)"></div><svg style="position:absolute;left:52px;top:809px" width="16" height="16"><use href="#sheet"/></svg><div style="position:absolute;left:71px;top:808px;height:16px;font-family:'Liberation Sans', sans-serif;font-size:11px;font-weight:400;line-height:16px;color:#000;white-space:pre;">Sheet8 (Reports)</div><div style="position:absolute;left:42px;top:832px;width:9px;height:1px;background:repeating-linear-gradient(90deg,#808080 0 1px,transparent 1px 2px)"></div><svg style="position:absolute;left:51px;top:824px" width="16" height="16"><use href="#wb"/></svg><div style="position:absolute;left:71px;top:824px;height:16px;font-family:'Liberation Sans', sans-serif;font-size:11px;font-weight:400;line-height:16px;color:#000;white-space:pre;">ThisWorkbook</div><div style="position:absolute;left:362px;top:440px;width:1278px;height:640px;z-index:1"><div style="position:absolute;left:0px;top:0px;width:1278px;height:640px;background:#d7e4f2;border:1px solid #4a4a4a;border-radius:7px 7px 0 0"></div><div style="position:absolute;left:1px;top:1px;width:1276px;height:639px;border-style:solid;border-width:1px 0 0 1px;border-color:#fff;border-radius:6px 6px 0 0"></div><div style="position:absolute;left:2px;top:2px;width:1274px;height:29px;background:linear-gradient(#bfcddb 0px,#cad8e7 15px,#d7e4f2 29px);border-radius:5px 5px 0 0"></div><div style="position:absolute;left:1168px;top:10px;width:32px;height:18px;background:linear-gradient(#ccd9e8 0%,#c3d2e4 45%,#b2c6de 46%,#bccee3 100%);border:1px solid #7a90ae;border-radius:3px;overflow:hidden;box-shadow:inset 0 0 0 1px rgba(255,255,255,0.55)"><div style="position:absolute;left:9px;top:7px;width:11px;height:5px;background:#fff;border:1px solid #334455;border-radius:1px"></div></div><div style="position:absolute;left:1202px;top:10px;width:32px;height:18px;background:linear-gradient(#ccd9e8 0%,#c3d2e4 45%,#b2c6de 46%,#bccee3 100%);border:1px solid #7a90ae;border-radius:3px;overflow:hidden;box-shadow:inset 0 0 0 1px rgba(255,255,255,0.55)"><div style="position:absolute;left:9px;top:3px;width:11px;height:9px;background:#fff;border:1px solid #334455;border-radius:1px"></div><div style="position:absolute;left:12px;top:6px;width:5px;height:3px;background:#6d87a8;border:1px solid #334455"></div></div><div style="position:absolute;left:1236px;top:10px;width:32px;height:18px;background:linear-gradient(#ccd9e8 0%,#c3d2e4 45%,#b2c6de 46%,#bccee3 100%);border:1px solid #7a90ae;border-radius:3px;overflow:hidden;box-shadow:inset 0 0 0 1px rgba(255,255,255,0.55)"><svg style="position:absolute;left:8px;top:2px" width="15" height="13"><path d="M3 3L11.5 9.5M11.5 3L3 9.5" stroke="#3a4250" stroke-width="4.6"/><path d="M3.6 3.5L10.9 9M10.9 3.5L3.6 9" stroke="#fff" stroke-width="2.4"/></svg></div><div style="position:absolute;left:8px;top:31px;width:1262px;height:601px;background:#f0f0f0"></div><div style="position:absolute;left:18px;top:33px;width:616px;height:22px;background:#fff;border:1px solid #7a7a7a"><svg style="position:absolute;left:601px;top:7px" width="11" height="7"><path d="M1 1L5.5 5.5L10 1" stroke="#505050" stroke-width="1.3" fill="none"/></svg></div><div style="position:absolute;left:644px;top:33px;width:616px;height:22px;background:#fff;border:1px solid #7a7a7a"><svg style="position:absolute;left:601px;top:7px" width="11" height="7"><path d="M1 1L5.5 5.5L10 1" stroke="#505050" stroke-width="1.3" fill="none"/></svg></div><div style="position:absolute;left:8px;top:57px;width:1262px;height:575px;background:#fff;border-style:solid;border-width:2px 2px 2px 2px;border-color:#696969 #fff #fff #696969"></div><div style="position:absolute;left:8px;top:57px;width:1262px;height:1px;background:#a0a0a0"></div><div style="position:absolute;left:8px;top:57px;width:1px;height:575px;background:#a0a0a0"></div><div style="position:absolute;left:1268px;top:58px;width:1px;height:573px;background:#e3e3e3"></div><div style="position:absolute;left:9px;top:630px;width:1260px;height:1px;background:#e3e3e3"></div><div style="position:absolute;left:10px;top:59px;width:20px;height:555px;background:#f0f0f0"></div><div style="position:absolute;left:30px;top:59px;width:1px;height:555px;background:#000"></div><div style="position:absolute;left:31px;top:59px;width:1221px;height:555px;overflow:hidden"><div style="position:absolute;left:11px;top:-106px;font-family:'Liberation Mono', monospace;font-size:13.333px;line-height:16px;color:#000;white-space:pre"><div style="height:16px">&nbsp;</div><div style="height:16px">&nbsp;</div><div style="height:16px">&nbsp;</div><div style="height:16px">&nbsp;</div><div style="height:16px">&nbsp;</div><div style="height:16px">&nbsp;</div><div style="height:16px">&nbsp;</div><div style="height:16px">&nbsp;</div><div style="height:16px">&nbsp;</div><div style="height:16px">&nbsp;</div><div style="height:16px">&nbsp;</div><div style="height:16px">&nbsp;</div><div style="height:16px">&nbsp;</div><div style="height:16px">&nbsp;</div><div style="height:16px">&nbsp;</div><div style="height:16px">&nbsp;</div><div style="height:16px">&nbsp;</div><div style="height:16px">&nbsp;</div><div style="height:16px">&nbsp;</div><div style="height:16px">&nbsp;</div><div style="height:16px">&nbsp;</div><div style="height:16px">&nbsp;</div><div style="height:16px">&nbsp;</div><div style="height:16px">&nbsp;</div><div style="height:16px">&nbsp;</div><div style="height:16px">        <b style="font-weight:400;color:#00007f">For</b> i = 0 <b style="font-weight:400;color:#00007f">To</b> UBound(entryCells)</div><div style="height:16px">            wsEntry.Range(entryCells(i)).Value = wsDB.Cells(f.Row, i + 1).Value</div><div style="height:16px">        <b style="font-weight:400;color:#00007f">Next</b> i</div><div style="height:16px">        MsgBox &quot;Record found!&quot;, vbInformation</div><div style="height:16px">    <b style="font-weight:400;color:#00007f">Else</b></div><div style="height:16px">        MsgBox &quot;Record not found!&quot;, vbExclamation</div><div style="height:16px">    <b style="font-weight:400;color:#00007f">End</b> <b style="font-weight:400;color:#00007f">If</b></div><div style="height:16px"><b style="font-weight:400;color:#00007f">End</b> <b style="font-weight:400;color:#00007f">Sub</b></div><div style="height:16px">&nbsp;</div><div style="height:16px">&nbsp;</div><div style="height:16px">&nbsp;</div><div style="height:16px">&nbsp;</div><div style="height:16px">&nbsp;</div><div style="height:16px">&nbsp;</div><div style="height:16px">&nbsp;</div><div style="height:16px">&nbsp;</div></div></div><div style="position:absolute;left:1252px;top:59px;width:16px;height:571px;background:#f0f0f0"></div><div style="position:absolute;left:1252px;top:59px;width:16px;height:8px;background:#f0f0f0;border-style:solid;border-width:1px 1px 2px 1px;border-color:#fff #696969 #696969 #fff"></div><svg style="position:absolute;left:1252px;top:67px" width="16" height="16"><path d="M4.5 10.5L8 7L11.5 10.5" stroke="#505050" stroke-width="2.3" fill="none"/></svg><div style="position:absolute;left:1252px;top:500px;width:15px;height:160px;background:#cdcdcd"></div><svg style="position:absolute;left:1252px;top:598px" width="16" height="16"><path d="M4.5 6.5L8 10L11.5 6.5" stroke="#505050" stroke-width="2.3" fill="none"/></svg><div style="position:absolute;left:10px;top:614px;width:1242px;height:16px;background:#f0f0f0"></div><div style="position:absolute;left:10px;top:613px;width:17px;height:17px;background:#f0f0f0;border-style:solid;border-width:1px 2px 2px 1px;border-color:#fff #696969 #696969 #fff"><svg style="position:absolute;left:2px;top:2px" width="11" height="6" shape-rendering="crispEdges"><rect x="0" y="0" width="10" height="1"/><rect x="3" y="2" width="7" height="1"/><rect x="0" y="4" width="10" height="1"/></svg></div><div style="position:absolute;left:27px;top:613px;width:16px;height:17px;background:#f0f0f0;border-style:solid;border-width:2px 0 0 2px;border-color:#696969"><svg style="position:absolute;left:1px;top:2px" width="11" height="10" shape-rendering="crispEdges"><rect x="0" y="0" width="10" height="1"/><rect x="3" y="2" width="7" height="1"/><rect x="0" y="4" width="10" height="1"/><rect x="3" y="6" width="7" height="1"/><rect x="0" y="8" width="10" height="1"/></svg></div><svg style="position:absolute;left:43px;top:614px" width="16" height="16"><path d="M10.5 4.5L7 8L10.5 11.5" stroke="#505050" stroke-width="2.3" fill="none"/></svg><svg style="position:absolute;left:1235px;top:614px" width="16" height="16"><path d="M5.5 4.5L9 8L5.5 11.5" stroke="#505050" stroke-width="2.3" fill="none"/></svg><svg style="position:absolute;left:1252px;top:614px" width="16" height="16"><g fill="#b0b0b0"><rect x="11" y="5" width="2" height="2"/><rect x="8" y="8" width="2" height="2"/><rect x="11" y="8" width="2" height="2"/><rect x="5" y="11" width="2" height="2"/><rect x="8" y="11" width="2" height="2"/><rect x="11" y="11" width="2" height="2"/></g></svg></div><div style="position:absolute;left:396px;top:163px;width:1278px;height:640px;z-index:3"><div style="position:absolute;left:0px;top:0px;width:1278px;height:640px;background:#d7e4f2;border:1px solid #4a4a4a;border-radius:7px 7px 0 0"></div><div style="position:absolute;left:1px;top:1px;width:1276px;height:639px;border-style:solid;border-width:1px 0 0 1px;border-color:#fff;border-radius:6px 6px 0 0"></div><div style="position:absolute;left:2px;top:2px;width:1274px;height:29px;background:linear-gradient(#bfcddb 0px,#cad8e7 15px,#d7e4f2 29px);border-radius:5px 5px 0 0"></div><div style="position:absolute;left:1168px;top:10px;width:32px;height:18px;background:linear-gradient(#ccd9e8 0%,#c3d2e4 45%,#b2c6de 46%,#bccee3 100%);border:1px solid #7a90ae;border-radius:3px;overflow:hidden;box-shadow:inset 0 0 0 1px rgba(255,255,255,0.55)"><div style="position:absolute;left:9px;top:7px;width:11px;height:5px;background:#fff;border:1px solid #334455;border-radius:1px"></div></div><div style="position:absolute;left:1202px;top:10px;width:32px;height:18px;background:linear-gradient(#ccd9e8 0%,#c3d2e4 45%,#b2c6de 46%,#bccee3 100%);border:1px solid #7a90ae;border-radius:3px;overflow:hidden;box-shadow:inset 0 0 0 1px rgba(255,255,255,0.55)"><div style="position:absolute;left:9px;top:3px;width:11px;height:9px;background:#fff;border:1px solid #334455;border-radius:1px"></div><div style="position:absolute;left:12px;top:6px;width:5px;height:3px;background:#6d87a8;border:1px solid #334455"></div></div><div style="position:absolute;left:1236px;top:10px;width:32px;height:18px;background:linear-gradient(#ccd9e8 0%,#c3d2e4 45%,#b2c6de 46%,#bccee3 100%);border:1px solid #7a90ae;border-radius:3px;overflow:hidden;box-shadow:inset 0 0 0 1px rgba(255,255,255,0.55)"><svg style="position:absolute;left:8px;top:2px" width="15" height="13"><path d="M3 3L11.5 9.5M11.5 3L3 9.5" stroke="#3a4250" stroke-width="4.6"/><path d="M3.6 3.5L10.9 9M10.9 3.5L3.6 9" stroke="#fff" stroke-width="2.4"/></svg></div><div style="position:absolute;left:8px;top:31px;width:1262px;height:601px;background:#f0f0f0"></div><div style="position:absolute;left:18px;top:33px;width:616px;height:22px;background:#fff;border:1px solid #7a7a7a"><svg style="position:absolute;left:601px;top:7px" width="11" height="7"><path d="M1 1L5.5 5.5L10 1" stroke="#505050" stroke-width="1.3" fill="none"/></svg></div><div style="position:absolute;left:644px;top:33px;width:616px;height:22px;background:#fff;border:1px solid #7a7a7a"><svg style="position:absolute;left:601px;top:7px" width="11" height="7"><path d="M1 1L5.5 5.5L10 1" stroke="#505050" stroke-width="1.3" fill="none"/></svg></div><div style="position:absolute;left:8px;top:57px;width:1262px;height:575px;background:#fff;border-style:solid;border-width:2px 2px 2px 2px;border-color:#696969 #fff #fff #696969"></div><div style="position:absolute;left:8px;top:57px;width:1262px;height:1px;background:#a0a0a0"></div><div style="position:absolute;left:8px;top:57px;width:1px;height:575px;background:#a0a0a0"></div><div style="position:absolute;left:1268px;top:58px;width:1px;height:573px;background:#e3e3e3"></div><div style="position:absolute;left:9px;top:630px;width:1260px;height:1px;background:#e3e3e3"></div><div style="position:absolute;left:10px;top:59px;width:20px;height:555px;background:#f0f0f0"></div><div style="position:absolute;left:30px;top:59px;width:1px;height:555px;background:#000"></div><div style="position:absolute;left:1252px;top:59px;width:16px;height:571px;background:#f0f0f0"></div><div style="position:absolute;left:1252px;top:59px;width:16px;height:8px;background:#f0f0f0;border-style:solid;border-width:1px 1px 2px 1px;border-color:#fff #696969 #696969 #fff"></div><svg style="position:absolute;left:1252px;top:67px" width="16" height="16"><path d="M4.5 10.5L8 7L11.5 10.5" stroke="#505050" stroke-width="2.3" fill="none"/></svg><div style="position:absolute;left:1252px;top:83px;width:15px;height:354px;background:#cdcdcd"></div><svg style="position:absolute;left:1252px;top:598px" width="16" height="16"><path d="M4.5 6.5L8 10L11.5 6.5" stroke="#505050" stroke-width="2.3" fill="none"/></svg><div style="position:absolute;left:10px;top:614px;width:1242px;height:16px;background:#f0f0f0"></div><div style="position:absolute;left:10px;top:613px;width:17px;height:17px;background:#f0f0f0;border-style:solid;border-width:1px 2px 2px 1px;border-color:#fff #696969 #696969 #fff"><svg style="position:absolute;left:2px;top:2px" width="11" height="6" shape-rendering="crispEdges"><rect x="0" y="0" width="10" height="1"/><rect x="3" y="2" width="7" height="1"/><rect x="0" y="4" width="10" height="1"/></svg></div><div style="position:absolute;left:27px;top:613px;width:16px;height:17px;background:#f0f0f0;border-style:solid;border-width:2px 0 0 2px;border-color:#696969"><svg style="position:absolute;left:1px;top:2px" width="11" height="10" shape-rendering="crispEdges"><rect x="0" y="0" width="10" height="1"/><rect x="3" y="2" width="7" height="1"/><rect x="0" y="4" width="10" height="1"/><rect x="3" y="6" width="7" height="1"/><rect x="0" y="8" width="10" height="1"/></svg></div><svg style="position:absolute;left:43px;top:614px" width="16" height="16"><path d="M10.5 4.5L7 8L10.5 11.5" stroke="#505050" stroke-width="2.3" fill="none"/></svg><div style="position:absolute;left:61px;top:614px;width:183px;height:15px;background:#cdcdcd"></div><svg style="position:absolute;left:1235px;top:614px" width="16" height="16"><path d="M5.5 4.5L9 8L5.5 11.5" stroke="#505050" stroke-width="2.3" fill="none"/></svg><svg style="position:absolute;left:1252px;top:614px" width="16" height="16"><g fill="#b0b0b0"><rect x="11" y="5" width="2" height="2"/><rect x="8" y="8" width="2" height="2"/><rect x="11" y="8" width="2" height="2"/><rect x="5" y="11" width="2" height="2"/><rect x="8" y="11" width="2" height="2"/><rect x="11" y="11" width="2" height="2"/></g></svg></div><div style="position:absolute;left:482px;top:206px;width:1278px;height:640px;z-index:4"><div style="position:absolute;left:0px;top:0px;width:1278px;height:640px;background:#d7e4f2;border:1px solid #4a4a4a;border-radius:7px 7px 0 0"></div><div style="position:absolute;left:1px;top:1px;width:1276px;height:639px;border-style:solid;border-width:1px 0 0 1px;border-color:#fff;border-radius:6px 6px 0 0"></div><div style="position:absolute;left:2px;top:2px;width:1274px;height:29px;background:linear-gradient(#bfcddb 0px,#cad8e7 15px,#d7e4f2 29px);border-radius:5px 5px 0 0"></div><div style="position:absolute;left:1168px;top:10px;width:32px;height:18px;background:linear-gradient(#ccd9e8 0%,#c3d2e4 45%,#b2c6de 46%,#bccee3 100%);border:1px solid #7a90ae;border-radius:3px;overflow:hidden;box-shadow:inset 0 0 0 1px rgba(255,255,255,0.55)"><div style="position:absolute;left:9px;top:7px;width:11px;height:5px;background:#fff;border:1px solid #334455;border-radius:1px"></div></div><div style="position:absolute;left:1202px;top:10px;width:32px;height:18px;background:linear-gradient(#ccd9e8 0%,#c3d2e4 45%,#b2c6de 46%,#bccee3 100%);border:1px solid #7a90ae;border-radius:3px;overflow:hidden;box-shadow:inset 0 0 0 1px rgba(255,255,255,0.55)"><div style="position:absolute;left:9px;top:3px;width:11px;height:9px;background:#fff;border:1px solid #334455;border-radius:1px"></div><div style="position:absolute;left:12px;top:6px;width:5px;height:3px;background:#6d87a8;border:1px solid #334455"></div></div><div style="position:absolute;left:1236px;top:10px;width:32px;height:18px;background:linear-gradient(#ccd9e8 0%,#c3d2e4 45%,#b2c6de 46%,#bccee3 100%);border:1px solid #7a90ae;border-radius:3px;overflow:hidden;box-shadow:inset 0 0 0 1px rgba(255,255,255,0.55)"><svg style="position:absolute;left:8px;top:2px" width="15" height="13"><path d="M3 3L11.5 9.5M11.5 3L3 9.5" stroke="#3a4250" stroke-width="4.6"/><path d="M3.6 3.5L10.9 9M10.9 3.5L3.6 9" stroke="#fff" stroke-width="2.4"/></svg></div><div style="position:absolute;left:8px;top:31px;width:1262px;height:601px;background:#f0f0f0"></div><div style="position:absolute;left:18px;top:33px;width:616px;height:22px;background:#fff;border:1px solid #7a7a7a"><svg style="position:absolute;left:601px;top:7px" width="11" height="7"><path d="M1 1L5.5 5.5L10 1" stroke="#505050" stroke-width="1.3" fill="none"/></svg></div><div style="position:absolute;left:644px;top:33px;width:616px;height:22px;background:#fff;border:1px solid #7a7a7a"><svg style="position:absolute;left:601px;top:7px" width="11" height="7"><path d="M1 1L5.5 5.5L10 1" stroke="#505050" stroke-width="1.3" fill="none"/></svg></div><div style="position:absolute;left:8px;top:57px;width:1262px;height:575px;background:#fff;border-style:solid;border-width:2px 2px 2px 2px;border-color:#696969 #fff #fff #696969"></div><div style="position:absolute;left:8px;top:57px;width:1262px;height:1px;background:#a0a0a0"></div><div style="position:absolute;left:8px;top:57px;width:1px;height:575px;background:#a0a0a0"></div><div style="position:absolute;left:1268px;top:58px;width:1px;height:573px;background:#e3e3e3"></div><div style="position:absolute;left:9px;top:630px;width:1260px;height:1px;background:#e3e3e3"></div><div style="position:absolute;left:10px;top:59px;width:20px;height:555px;background:#f0f0f0"></div><div style="position:absolute;left:30px;top:59px;width:1px;height:555px;background:#000"></div><div style="position:absolute;left:31px;top:59px;width:1221px;height:555px;overflow:hidden"><div style="position:absolute;left:11px;top:3px;font-family:'Liberation Mono', monospace;font-size:13.333px;line-height:16px;color:#000;white-space:pre"><div style="height:16px">&nbsp;</div><div style="height:16px">&nbsp;</div><div style="height:16px">&nbsp;</div><div style="height:16px">&nbsp;</div><div style="height:16px">&nbsp;</div><div style="height:16px">&nbsp;</div><div style="height:16px">&nbsp;</div><div style="height:16px">&nbsp;</div><div style="height:16px">&nbsp;</div><div style="height:16px">&nbsp;</div><div style="height:16px">&nbsp;</div><div style="height:16px">&nbsp;</div><div style="height:16px">&nbsp;</div><div style="height:16px">&nbsp;</div><div style="height:16px">&nbsp;</div><div style="height:16px">&nbsp;</div><div style="height:16px">&nbsp;</div><div style="height:16px">&nbsp;</div><div style="height:16px">&nbsp;</div><div style="height:16px">&nbsp;</div><div style="height:16px">&nbsp;</div><div style="height:16px">&nbsp;</div><div style="height:16px">&nbsp;</div><div style="height:16px">&nbsp;</div><div style="height:16px">&nbsp;</div><div style="height:16px">&nbsp;</div><div style="height:16px">&nbsp;</div><div style="height:16px">&nbsp;</div><div style="height:16px">        <b style="font-weight:400;color:#00007f">For</b> i = 0 <b style="font-weight:400;color:#00007f">To</b> UBound(entryCells)</div><div style="height:16px">            wsEntry.Range(entryCells(i)).Value = wsDB.Cells(f.Row, i + 1).Value</div><div style="height:16px">        <b style="font-weight:400;color:#00007f">Next</b> i</div><div style="height:16px">        MsgBox &quot;Record found!&quot;, vbInformation</div><div style="height:16px">    <b style="font-weight:400;color:#00007f">Else</b></div><div style="height:16px">        MsgBox &quot;Record not found!&quot;, vbExclamation</div></div></div><div style="position:absolute;left:1252px;top:59px;width:16px;height:571px;background:#f0f0f0"></div><div style="position:absolute;left:1252px;top:59px;width:16px;height:8px;background:#f0f0f0;border-style:solid;border-width:1px 1px 2px 1px;border-color:#fff #696969 #696969 #fff"></div><svg style="position:absolute;left:1252px;top:67px" width="16" height="16"><path d="M4.5 10.5L8 7L11.5 10.5" stroke="#505050" stroke-width="2.3" fill="none"/></svg><div style="position:absolute;left:1252px;top:84px;width:15px;height:446px;background:#cdcdcd"></div><svg style="position:absolute;left:1252px;top:598px" width="16" height="16"><path d="M4.5 6.5L8 10L11.5 6.5" stroke="#505050" stroke-width="2.3" fill="none"/></svg><div style="position:absolute;left:10px;top:614px;width:1242px;height:16px;background:#f0f0f0"></div><div style="position:absolute;left:10px;top:613px;width:17px;height:17px;background:#f0f0f0;border-style:solid;border-width:1px 2px 2px 1px;border-color:#fff #696969 #696969 #fff"><svg style="position:absolute;left:2px;top:2px" width="11" height="6" shape-rendering="crispEdges"><rect x="0" y="0" width="10" height="1"/><rect x="3" y="2" width="7" height="1"/><rect x="0" y="4" width="10" height="1"/></svg></div><div style="position:absolute;left:27px;top:613px;width:16px;height:17px;background:#f0f0f0;border-style:solid;border-width:2px 0 0 2px;border-color:#696969"><svg style="position:absolute;left:1px;top:2px" width="11" height="10" shape-rendering="crispEdges"><rect x="0" y="0" width="10" height="1"/><rect x="3" y="2" width="7" height="1"/><rect x="0" y="4" width="10" height="1"/><rect x="3" y="6" width="7" height="1"/><rect x="0" y="8" width="10" height="1"/></svg></div><svg style="position:absolute;left:43px;top:614px" width="16" height="16"><path d="M10.5 4.5L7 8L10.5 11.5" stroke="#505050" stroke-width="2.3" fill="none"/></svg><div style="position:absolute;left:61px;top:614px;width:173px;height:15px;background:#cdcdcd"></div><svg style="position:absolute;left:1235px;top:614px" width="16" height="16"><path d="M5.5 4.5L9 8L5.5 11.5" stroke="#505050" stroke-width="2.3" fill="none"/></svg><svg style="position:absolute;left:1252px;top:614px" width="16" height="16"><g fill="#b0b0b0"><rect x="11" y="5" width="2" height="2"/><rect x="8" y="8" width="2" height="2"/><rect x="11" y="8" width="2" height="2"/><rect x="5" y="11" width="2" height="2"/><rect x="8" y="11" width="2" height="2"/><rect x="11" y="11" width="2" height="2"/></g></svg></div><div style="position:absolute;left:552px;top:319px;width:1278px;height:640px;z-index:2"><div style="position:absolute;left:0px;top:0px;width:1278px;height:640px;background:#d7e4f2;border:1px solid #4a4a4a;border-radius:7px 7px 0 0"></div><div style="position:absolute;left:1px;top:1px;width:1276px;height:639px;border-style:solid;border-width:1px 0 0 1px;border-color:#fff;border-radius:6px 6px 0 0"></div><div style="position:absolute;left:2px;top:2px;width:1274px;height:29px;background:linear-gradient(#bfcddb 0px,#cad8e7 15px,#d7e4f2 29px);border-radius:5px 5px 0 0"></div><div style="position:absolute;left:1168px;top:10px;width:32px;height:18px;background:linear-gradient(#ccd9e8 0%,#c3d2e4 45%,#b2c6de 46%,#bccee3 100%);border:1px solid #7a90ae;border-radius:3px;overflow:hidden;box-shadow:inset 0 0 0 1px rgba(255,255,255,0.55)"><div style="position:absolute;left:9px;top:7px;width:11px;height:5px;background:#fff;border:1px solid #334455;border-radius:1px"></div></div><div style="position:absolute;left:1202px;top:10px;width:32px;height:18px;background:linear-gradient(#ccd9e8 0%,#c3d2e4 45%,#b2c6de 46%,#bccee3 100%);border:1px solid #7a90ae;border-radius:3px;overflow:hidden;box-shadow:inset 0 0 0 1px rgba(255,255,255,0.55)"><div style="position:absolute;left:9px;top:3px;width:11px;height:9px;background:#fff;border:1px solid #334455;border-radius:1px"></div><div style="position:absolute;left:12px;top:6px;width:5px;height:3px;background:#6d87a8;border:1px solid #334455"></div></div><div style="position:absolute;left:1236px;top:10px;width:32px;height:18px;background:linear-gradient(#ccd9e8 0%,#c3d2e4 45%,#b2c6de 46%,#bccee3 100%);border:1px solid #7a90ae;border-radius:3px;overflow:hidden;box-shadow:inset 0 0 0 1px rgba(255,255,255,0.55)"><svg style="position:absolute;left:8px;top:2px" width="15" height="13"><path d="M3 3L11.5 9.5M11.5 3L3 9.5" stroke="#3a4250" stroke-width="4.6"/><path d="M3.6 3.5L10.9 9M10.9 3.5L3.6 9" stroke="#fff" stroke-width="2.4"/></svg></div><div style="position:absolute;left:8px;top:31px;width:1262px;height:601px;background:#f0f0f0"></div><div style="position:absolute;left:18px;top:33px;width:616px;height:22px;background:#fff;border:1px solid #7a7a7a"><svg style="position:absolute;left:601px;top:7px" width="11" height="7"><path d="M1 1L5.5 5.5L10 1" stroke="#505050" stroke-width="1.3" fill="none"/></svg></div><div style="position:absolute;left:644px;top:33px;width:616px;height:22px;background:#fff;border:1px solid #7a7a7a"><svg style="position:absolute;left:601px;top:7px" width="11" height="7"><path d="M1 1L5.5 5.5L10 1" stroke="#505050" stroke-width="1.3" fill="none"/></svg></div><div style="position:absolute;left:8px;top:57px;width:1262px;height:575px;background:#fff;border-style:solid;border-width:2px 2px 2px 2px;border-color:#696969 #fff #fff #696969"></div><div style="position:absolute;left:8px;top:57px;width:1262px;height:1px;background:#a0a0a0"></div><div style="position:absolute;left:8px;top:57px;width:1px;height:575px;background:#a0a0a0"></div><div style="position:absolute;left:1268px;top:58px;width:1px;height:573px;background:#e3e3e3"></div><div style="position:absolute;left:9px;top:630px;width:1260px;height:1px;background:#e3e3e3"></div><div style="position:absolute;left:10px;top:59px;width:20px;height:555px;background:#f0f0f0"></div><div style="position:absolute;left:30px;top:59px;width:1px;height:555px;background:#000"></div><div style="position:absolute;left:1252px;top:59px;width:16px;height:571px;background:#f0f0f0"></div><div style="position:absolute;left:1252px;top:59px;width:16px;height:8px;background:#f0f0f0;border-style:solid;border-width:1px 1px 2px 1px;border-color:#fff #696969 #696969 #fff"></div><svg style="position:absolute;left:1252px;top:67px" width="16" height="16"><path d="M4.5 10.5L8 7L11.5 10.5" stroke="#505050" stroke-width="2.3" fill="none"/></svg><div style="position:absolute;left:1252px;top:83px;width:15px;height:513px;background:#cdcdcd"></div><svg style="position:absolute;left:1252px;top:598px" width="16" height="16"><path d="M4.5 6.5L8 10L11.5 6.5" stroke="#505050" stroke-width="2.3" fill="none"/></svg><div style="position:absolute;left:10px;top:614px;width:1242px;height:16px;background:#f0f0f0"></div><div style="position:absolute;left:10px;top:613px;width:17px;height:17px;background:#f0f0f0;border-style:solid;border-width:1px 2px 2px 1px;border-color:#fff #696969 #696969 #fff"><svg style="position:absolute;left:2px;top:2px" width="11" height="6" shape-rendering="crispEdges"><rect x="0" y="0" width="10" height="1"/><rect x="3" y="2" width="7" height="1"/><rect x="0" y="4" width="10" height="1"/></svg></div><div style="position:absolute;left:27px;top:613px;width:16px;height:17px;background:#f0f0f0;border-style:solid;border-width:2px 0 0 2px;border-color:#696969"><svg style="position:absolute;left:1px;top:2px" width="11" height="10" shape-rendering="crispEdges"><rect x="0" y="0" width="10" height="1"/><rect x="3" y="2" width="7" height="1"/><rect x="0" y="4" width="10" height="1"/><rect x="3" y="6" width="7" height="1"/><rect x="0" y="8" width="10" height="1"/></svg></div><svg style="position:absolute;left:43px;top:614px" width="16" height="16"><path d="M10.5 4.5L7 8L10.5 11.5" stroke="#505050" stroke-width="2.3" fill="none"/></svg><div style="position:absolute;left:61px;top:614px;width:173px;height:15px;background:#cdcdcd"></div><svg style="position:absolute;left:1235px;top:614px" width="16" height="16"><path d="M5.5 4.5L9 8L5.5 11.5" stroke="#505050" stroke-width="2.3" fill="none"/></svg><svg style="position:absolute;left:1252px;top:614px" width="16" height="16"><g fill="#b0b0b0"><rect x="11" y="5" width="2" height="2"/><rect x="8" y="8" width="2" height="2"/><rect x="11" y="8" width="2" height="2"/><rect x="5" y="11" width="2" height="2"/><rect x="8" y="11" width="2" height="2"/><rect x="11" y="11" width="2" height="2"/></g></svg></div><div style="position:absolute;left:318px;top:85px;width:1278px;height:640px;z-index:10"><div style="position:absolute;left:0px;top:0px;width:1278px;height:640px;background:#b9d1ea;border:1px solid #000;border-radius:7px 7px 0 0"></div><div style="position:absolute;left:1px;top:1px;width:1276px;height:639px;border-style:solid;border-width:1px 0 0 1px;border-color:#fff;border-radius:6px 6px 0 0"></div><div style="position:absolute;left:2px;top:2px;width:1274px;height:29px;background:linear-gradient(#99b4d1 0px,#aac3de 15px,#b9d1ea 29px);border-radius:5px 5px 0 0"></div><div style="position:absolute;left:1276px;top:8px;width:1px;height:631px;background:#49d4f0"></div><div style="position:absolute;left:2px;top:638px;width:1274px;height:1px;background:#49d4f0"></div><div style="position:absolute;left:1168px;top:10px;width:32px;height:18px;background:linear-gradient(#c9d8ea 0%,#bfd0e6 42%,#9fb9d6 43%,#b3c9e2 100%);border:1px solid #53719a;border-radius:3px;overflow:hidden;box-shadow:inset 0 0 0 1px rgba(255,255,255,0.55)"><div style="position:absolute;left:9px;top:7px;width:11px;height:5px;background:#fff;border:1px solid #334455;border-radius:1px"></div></div><div style="position:absolute;left:1202px;top:10px;width:32px;height:18px;background:linear-gradient(#c9d8ea 0%,#bfd0e6 42%,#9fb9d6 43%,#b3c9e2 100%);border:1px solid #53719a;border-radius:3px;overflow:hidden;box-shadow:inset 0 0 0 1px rgba(255,255,255,0.55)"><div style="position:absolute;left:9px;top:3px;width:11px;height:9px;background:#fff;border:1px solid #334455;border-radius:1px"></div><div style="position:absolute;left:12px;top:6px;width:5px;height:3px;background:#6d87a8;border:1px solid #334455"></div></div><div style="position:absolute;left:1236px;top:10px;width:32px;height:18px;background:linear-gradient(#e8a49c 0%,#e19a8c 40%,#b8643c 41%,#c4804f 100%);border:1px solid #5a1010;border-radius:3px;overflow:hidden;box-shadow:inset 0 0 0 1px rgba(255,255,255,0.55)"><svg style="position:absolute;left:8px;top:2px" width="15" height="13"><path d="M3 3L11.5 9.5M11.5 3L3 9.5" stroke="#3a4250" stroke-width="4.6"/><path d="M3.6 3.5L10.9 9M10.9 3.5L3.6 9" stroke="#fff" stroke-width="2.4"/></svg></div><svg style="position:absolute;left:10px;top:11px" width="16" height="16"><use href="#mod"/></svg><div style="position:absolute;left:30px;top:12px;height:16px;font-family:'Liberation Sans', sans-serif;font-size:11.8px;font-weight:400;line-height:16px;color:#000;white-space:pre;">data -base.xlsm - Module28 (Code)</div><div style="position:absolute;left:8px;top:31px;width:1262px;height:601px;background:#f0f0f0"></div><div style="position:absolute;left:18px;top:33px;width:616px;height:22px;background:#fff;border:1px solid #7a7a7a"><div style="position:absolute;left:3px;top:2px;height:14px;font-family:'Liberation Sans', sans-serif;font-size:11.5px;font-weight:700;line-height:14px;color:#000;white-space:pre;">(General)</div><svg style="position:absolute;left:601px;top:7px" width="11" height="7"><path d="M1 1L5.5 5.5L10 1" stroke="#505050" stroke-width="1.3" fill="none"/></svg></div><div style="position:absolute;left:644px;top:33px;width:616px;height:22px;background:#fff;border:1px solid #7a7a7a"><div style="position:absolute;left:3px;top:2px;height:14px;font-family:'Liberation Sans', sans-serif;font-size:11.1px;font-weight:700;line-height:14px;color:#000;white-space:pre;">Search_Cost_Data</div><svg style="position:absolute;left:601px;top:7px" width="11" height="7"><path d="M1 1L5.5 5.5L10 1" stroke="#505050" stroke-width="1.3" fill="none"/></svg></div><div style="position:absolute;left:8px;top:57px;width:1262px;height:575px;background:#fff;border-style:solid;border-width:2px 2px 2px 2px;border-color:#696969 #fff #fff #696969"></div><div style="position:absolute;left:8px;top:57px;width:1262px;height:1px;background:#a0a0a0"></div><div style="position:absolute;left:8px;top:57px;width:1px;height:575px;background:#a0a0a0"></div><div style="position:absolute;left:1268px;top:58px;width:1px;height:573px;background:#e3e3e3"></div><div style="position:absolute;left:9px;top:630px;width:1260px;height:1px;background:#e3e3e3"></div><div style="position:absolute;left:10px;top:59px;width:20px;height:555px;background:#f0f0f0"></div><div style="position:absolute;left:30px;top:59px;width:1px;height:555px;background:#000"></div><div style="position:absolute;left:31px;top:59px;width:1221px;height:555px;overflow:hidden"><div style="position:absolute;left:11px;top:3px;font-family:'Liberation Mono', monospace;font-size:13.333px;line-height:16px;color:#000;white-space:pre"><div style="height:16px"><b style="font-weight:400;color:#00007f">Sub</b> Search_Cost_Data()</div><div style="height:16px">    <b style="font-weight:400;color:#00007f">Dim</b> wsEntry <b style="font-weight:400;color:#00007f">As</b> Worksheet, wsDB <b style="font-weight:400;color:#00007f">As</b> Worksheet</div><div style="height:16px">    <b style="font-weight:400;color:#00007f">Dim</b> searchID <b style="font-weight:400;color:#00007f">As</b> <b style="font-weight:400;color:#00007f">String</b>, searchName <b style="font-weight:400;color:#00007f">As</b> <b style="font-weight:400;color:#00007f">String</b></div><div style="height:16px">    <b style="font-weight:400;color:#00007f">Dim</b> rngID <b style="font-weight:400;color:#00007f">As</b> Range, rngName <b style="font-weight:400;color:#00007f">As</b> Range, foundCell <b style="font-weight:400;color:#00007f">As</b> Range</div><div style="height:16px">    <b style="font-weight:400;color:#00007f">Dim</b> entryCells <b style="font-weight:400;color:#00007f">As</b> <b style="font-weight:400;color:#00007f">Variant</b>, i <b style="font-weight:400;color:#00007f">As</b> <b style="font-weight:400;color:#00007f">Integer</b></div><div style="height:16px">    <b style="font-weight:400;color:#00007f">Dim</b> lastRow <b style="font-weight:400;color:#00007f">As</b> <b style="font-weight:400;color:#00007f">Long</b></div><div style="height:16px">&nbsp;</div><div style="height:16px">    <b style="font-weight:400;color:#00007f">Set</b> wsEntry = ThisWorkbook.Sheets(&quot;dataentrycost&quot;)</div><div style="height:16px">    <b style="font-weight:400;color:#00007f">Set</b> wsDB = ThisWorkbook.Sheets(&quot;costdatabase&quot;)</div><div style="height:16px">&nbsp;</div><div style="height:16px">    entryCells = Array(&quot;E6&quot;, &quot;E9&quot;, &quot;E12&quot;, &quot;E15&quot;, &quot;E18&quot;, &quot;E21&quot;, _</div><div style="height:16px">                       &quot;I6&quot;, &quot;I9&quot;, &quot;I12&quot;, &quot;I15&quot;, &quot;I18&quot;, &quot;I21&quot;, _</div><div style="height:16px">                       &quot;M6&quot;, &quot;M9&quot;, &quot;M12&quot;)</div><div style="height:16px">&nbsp;</div><div style="height:16px">    <i style="font-style:normal;color:#007f00">&#x27; Read search values</i></div><div style="height:16px">    searchID = Trim(wsEntry.Range(&quot;E6&quot;).Value)</div><div style="height:16px">    searchName = Trim(wsEntry.Range(&quot;E12&quot;).Value)</div><div style="height:16px">&nbsp;</div><div style="height:16px">    lastRow = wsDB.Cells(wsDB.Rows.Count, &quot;A&quot;).End(xlUp).Row</div><div style="height:16px">    <b style="font-weight:400;color:#00007f">Set</b> rngID = wsDB.Range(&quot;A5:A&quot; &amp; lastRow)      <i style="font-style:normal;color:#007f00">&#x27; ID column</i></div><div style="height:16px">    <b style="font-weight:400;color:#00007f">Set</b> rngName = wsDB.Range(&quot;C5:C&quot; &amp; lastRow)    <i style="font-style:normal;color:#007f00">&#x27; Name column (ÇÝÊÑÖÊ ÇáÇÓã Ýí ÇáÚãæÏ C)</i></div><div style="height:16px">&nbsp;</div><div style="height:16px">    <b style="font-weight:400;color:#00007f">Set</b> foundCell = <b style="font-weight:400;color:#00007f">Nothing</b></div><div style="height:16px">&nbsp;</div><div style="height:16px">    <i style="font-style:normal;color:#007f00">&#x27; Priority: search by ID first, then by Name</i></div><div style="height:16px">    <b style="font-weight:400;color:#00007f">If</b> searchID &lt;&gt; &quot;&quot; <b style="font-weight:400;color:#00007f">Then</b></div><div style="height:16px">        <b style="font-weight:400;color:#00007f">Set</b> foundCell = rngID.Find(What:=searchID, LookAt:=xlWhole, MatchCase:=<b style="font-weight:400;color:#00007f">False</b>)</div><div style="height:16px">    <b style="font-weight:400;color:#00007f">End</b> <b style="font-weight:400;color:#00007f">If</b></div><div style="height:16px">&nbsp;</div><div style="height:16px">    <b style="font-weight:400;color:#00007f">If</b> foundCell <b style="font-weight:400;color:#00007f">Is</b> <b style="font-weight:400;color:#00007f">Nothing</b> <b style="font-weight:400;color:#00007f">And</b> searchName &lt;&gt; &quot;&quot; <b style="font-weight:400;color:#00007f">Then</b></div><div style="height:16px">        <b style="font-weight:400;color:#00007f">Set</b> foundCell = rngName.Find(What:=searchName, LookAt:=xlWhole, MatchCase:=<b style="font-weight:400;color:#00007f">False</b>)</div><div style="height:16px">    <b style="font-weight:400;color:#00007f">End</b> <b style="font-weight:400;color:#00007f">If</b></div><div style="height:16px">&nbsp;</div><div style="height:16px">    <i style="font-style:normal;color:#007f00">&#x27; If found, load data</i></div></div></div><div style="position:absolute;left:1252px;top:59px;width:16px;height:571px;background:#f0f0f0"></div><div style="position:absolute;left:1252px;top:59px;width:16px;height:8px;background:#f0f0f0;border-style:solid;border-width:1px 1px 2px 1px;border-color:#fff #696969 #696969 #fff"></div><svg style="position:absolute;left:1252px;top:67px" width="16" height="16"><path d="M4.5 10.5L8 7L11.5 10.5" stroke="#505050" stroke-width="2.3" fill="none"/></svg><div style="position:absolute;left:1252px;top:83px;width:15px;height:379px;background:#cdcdcd"></div><svg style="position:absolute;left:1252px;top:598px" width="16" height="16"><path d="M4.5 6.5L8 10L11.5 6.5" stroke="#505050" stroke-width="2.3" fill="none"/></svg><div style="position:absolute;left:10px;top:614px;width:1242px;height:16px;background:#f0f0f0"></div><div style="position:absolute;left:10px;top:613px;width:17px;height:17px;background:#f0f0f0;border-style:solid;border-width:1px 2px 2px 1px;border-color:#fff #696969 #696969 #fff"><svg style="position:absolute;left:2px;top:2px" width="11" height="6" shape-rendering="crispEdges"><rect x="0" y="0" width="10" height="1"/><rect x="3" y="2" width="7" height="1"/><rect x="0" y="4" width="10" height="1"/></svg></div><div style="position:absolute;left:27px;top:613px;width:16px;height:17px;background:#f0f0f0;border-style:solid;border-width:2px 0 0 2px;border-color:#696969"><svg style="position:absolute;left:1px;top:2px" width="11" height="10" shape-rendering="crispEdges"><rect x="0" y="0" width="10" height="1"/><rect x="3" y="2" width="7" height="1"/><rect x="0" y="4" width="10" height="1"/><rect x="3" y="6" width="7" height="1"/><rect x="0" y="8" width="10" height="1"/></svg></div><svg style="position:absolute;left:43px;top:614px" width="16" height="16"><path d="M10.5 4.5L7 8L10.5 11.5" stroke="#505050" stroke-width="2.3" fill="none"/></svg><div style="position:absolute;left:61px;top:614px;width:173px;height:15px;background:#cdcdcd"></div><svg style="position:absolute;left:1235px;top:614px" width="16" height="16"><path d="M5.5 4.5L9 8L5.5 11.5" stroke="#505050" stroke-width="2.3" fill="none"/></svg><svg style="position:absolute;left:1252px;top:614px" width="16" height="16"><g fill="#b0b0b0"><rect x="11" y="5" width="2" height="2"/><rect x="8" y="8" width="2" height="2"/><rect x="11" y="8" width="2" height="2"/><rect x="5" y="11" width="2" height="2"/><rect x="8" y="11" width="2" height="2"/><rect x="11" y="11" width="2" height="2"/></g></svg></div><div style="position:absolute;left:360px;top:147px;width:1px;height:15px;background:#000;z-index:11"></div><svg style="position:absolute;left:0;top:0;z-index:50" width="1915" height="1032"><g opacity="0.32"><g fill="none" stroke="#969696" stroke-width="11" stroke-linecap="round"><path d="M864 934 A 16.5 15 0 0 0 864 964 H 1040"/><path d="M881 910 V 955"/><circle cx="918.5" cy="939" r="15.3"/><path d="M960 942 V 955 M980.5 939 V 955 M1014 935 V 955"/><circle cx="1050" cy="950" r="15.5"/></g><g fill="#969696"><circle cx="910.5" cy="912" r="6.5"/><circle cx="926.5" cy="912" r="6.5"/><circle cx="951.5" cy="925" r="6.5"/><circle cx="967" cy="925" r="6.5"/></g><text x="842" y="1003" font-family="Liberation Sans" font-weight="700" font-size="37" fill="#969696" textLength="229" lengthAdjust="spacingAndGlyphs">mostaql.com</text></g></svg><div style="position:absolute;left:1909px;top:83px;width:1px;height:949px;background:#f0f0f0;z-index:60"></div><div style="position:absolute;left:1910px;top:250px;width:5px;height:782px;background:repeating-linear-gradient(180deg,#3a3a3a 0 1px,transparent 1px 20px);z-index:60"></div><div style="position:absolute;left:1910px;top:262px;height:14px;font-family:'Liberation Sans', sans-serif;font-size:11px;font-weight:400;line-height:14px;color:#9090a8;white-space:pre;z-index:61;overflow:hidden;width:5px">0</div><div style="position:absolute;left:1910px;top:282px;height:14px;font-family:'Liberation Sans', sans-serif;font-size:11px;font-weight:400;line-height:14px;color:#9090a8;white-space:pre;z-index:61;overflow:hidden;width:5px">1</div><div style="position:absolute;left:1910px;top:302px;height:14px;font-family:'Liberation Sans', sans-serif;font-size:11px;font-weight:400;line-height:14px;color:#9090a8;white-space:pre;z-index:61;overflow:hidden;width:5px">2</div><div style="position:absolute;left:1910px;top:322px;height:14px;font-family:'Liberation Sans', sans-serif;font-size:11px;font-weight:400;line-height:14px;color:#9090a8;white-space:pre;z-index:61;overflow:hidden;width:5px">3</div><div style="position:absolute;left:1910px;top:342px;height:14px;font-family:'Liberation Sans', sans-serif;font-size:11px;font-weight:400;line-height:14px;color:#9090a8;white-space:pre;z-index:61;overflow:hidden;width:5px">4</div><div style="position:absolute;left:1910px;top:362px;height:14px;font-family:'Liberation Sans', sans-serif;font-size:11px;font-weight:400;line-height:14px;color:#9090a8;white-space:pre;z-index:61;overflow:hidden;width:5px">5</div><div style="position:absolute;left:1910px;top:382px;height:14px;font-family:'Liberation Sans', sans-serif;font-size:11px;font-weight:400;line-height:14px;color:#9090a8;white-space:pre;z-index:61;overflow:hidden;width:5px">6</div><div style="position:absolute;left:1910px;top:402px;height:14px;font-family:'Liberation Sans', sans-serif;font-size:11px;font-weight:400;line-height:14px;color:#9090a8;white-space:pre;z-index:61;overflow:hidden;width:5px">7</div><div style="position:absolute;left:1910px;top:422px;height:14px;font-family:'Liberation Sans', sans-serif;font-size:11px;font-weight:400;line-height:14px;color:#9090a8;white-space:pre;z-index:61;overflow:hidden;width:5px">8</div><div style="position:absolute;left:1910px;top:442px;height:14px;font-family:'Liberation Sans', sans-serif;font-size:11px;font-weight:400;line-height:14px;color:#9090a8;white-space:pre;z-index:61;overflow:hidden;width:5px">9</div><div style="position:absolute;left:1910px;top:462px;height:14px;font-family:'Liberation Sans', sans-serif;font-size:11px;font-weight:400;line-height:14px;color:#9090a8;white-space:pre;z-index:61;overflow:hidden;width:5px">0</div><div style="position:absolute;left:1910px;top:482px;height:14px;font-family:'Liberation Sans', sans-serif;font-size:11px;font-weight:400;line-height:14px;color:#9090a8;white-space:pre;z-index:61;overflow:hidden;width:5px">1</div><div style="position:absolute;left:1910px;top:502px;height:14px;font-family:'Liberation Sans', sans-serif;font-size:11px;font-weight:400;line-height:14px;color:#9090a8;white-space:pre;z-index:61;overflow:hidden;width:5px">2</div><div style="position:absolute;left:1910px;top:522px;height:14px;font-family:'Liberation Sans', sans-serif;font-size:11px;font-weight:400;line-height:14px;color:#9090a8;white-space:pre;z-index:61;overflow:hidden;width:5px">3</div><div style="position:absolute;left:1910px;top:542px;height:14px;font-family:'Liberation Sans', sans-serif;font-size:11px;font-weight:400;line-height:14px;color:#9090a8;white-space:pre;z-index:61;overflow:hidden;width:5px">4</div><div style="position:absolute;left:1910px;top:562px;height:14px;font-family:'Liberation Sans', sans-serif;font-size:11px;font-weight:400;line-height:14px;color:#9090a8;white-space:pre;z-index:61;overflow:hidden;width:5px">5</div><div style="position:absolute;left:1910px;top:582px;height:14px;font-family:'Liberation Sans', sans-serif;font-size:11px;font-weight:400;line-height:14px;color:#9090a8;white-space:pre;z-index:61;overflow:hidden;width:5px">6</div><div style="position:absolute;left:1910px;top:602px;height:14px;font-family:'Liberation Sans', sans-serif;font-size:11px;font-weight:400;line-height:14px;color:#9090a8;white-space:pre;z-index:61;overflow:hidden;width:5px">7</div><div style="position:absolute;left:1910px;top:622px;height:14px;font-family:'Liberation Sans', sans-serif;font-size:11px;font-weight:400;line-height:14px;color:#9090a8;white-space:pre;z-index:61;overflow:hidden;width:5px">8</div><div style="position:absolute;left:1910px;top:642px;height:14px;font-family:'Liberation Sans', sans-serif;font-size:11px;font-weight:400;line-height:14px;color:#9090a8;white-space:pre;z-index:61;overflow:hidden;width:5px">9</div><div style="position:absolute;left:1910px;top:662px;height:14px;font-family:'Liberation Sans', sans-serif;font-size:11px;font-weight:400;line-height:14px;color:#9090a8;white-space:pre;z-index:61;overflow:hidden;width:5px">0</div><div style="position:absolute;left:1910px;top:682px;height:14px;font-family:'Liberation Sans', sans-serif;font-size:11px;font-weight:400;line-height:14px;color:#9090a8;white-space:pre;z-index:61;overflow:hidden;width:5px">1</div><div style="position:absolute;left:1910px;top:702px;height:14px;font-family:'Liberation Sans', sans-serif;font-size:11px;font-weight:400;line-height:14px;color:#9090a8;white-space:pre;z-index:61;overflow:hidden;width:5px">2</div><div style="position:absolute;left:1910px;top:722px;height:14px;font-family:'Liberation Sans', sans-serif;font-size:11px;font-weight:400;line-height:14px;color:#9090a8;white-space:pre;z-index:61;overflow:hidden;width:5px">3</div><div style="position:absolute;left:1910px;top:742px;height:14px;font-family:'Liberation Sans', sans-serif;font-size:11px;font-weight:400;line-height:14px;color:#9090a8;white-space:pre;z-index:61;overflow:hidden;width:5px">4</div><div style="position:absolute;left:1910px;top:762px;height:14px;font-family:'Liberation Sans', sans-serif;font-size:11px;font-weight:400;line-height:14px;color:#9090a8;white-space:pre;z-index:61;overflow:hidden;width:5px">5</div><div style="position:absolute;left:1910px;top:782px;height:14px;font-family:'Liberation Sans', sans-serif;font-size:11px;font-weight:400;line-height:14px;color:#9090a8;white-space:pre;z-index:61;overflow:hidden;width:5px">6</div><div style="position:absolute;left:1910px;top:802px;height:14px;font-family:'Liberation Sans', sans-serif;font-size:11px;font-weight:400;line-height:14px;color:#9090a8;white-space:pre;z-index:61;overflow:hidden;width:5px">7</div><div style="position:absolute;left:1910px;top:822px;height:14px;font-family:'Liberation Sans', sans-serif;font-size:11px;font-weight:400;line-height:14px;color:#9090a8;white-space:pre;z-index:61;overflow:hidden;width:5px">8</div><div style="position:absolute;left:1910px;top:842px;height:14px;font-family:'Liberation Sans', sans-serif;font-size:11px;font-weight:400;line-height:14px;color:#9090a8;white-space:pre;z-index:61;overflow:hidden;width:5px">9</div><div style="position:absolute;left:1910px;top:862px;height:14px;font-family:'Liberation Sans', sans-serif;font-size:11px;font-weight:400;line-height:14px;color:#9090a8;white-space:pre;z-index:61;overflow:hidden;width:5px">0</div><div style="position:absolute;left:1910px;top:882px;height:14px;font-family:'Liberation Sans', sans-serif;font-size:11px;font-weight:400;line-height:14px;color:#9090a8;white-space:pre;z-index:61;overflow:hidden;width:5px">1</div><div style="position:absolute;left:1910px;top:902px;height:14px;font-family:'Liberation Sans', sans-serif;font-size:11px;font-weight:400;line-height:14px;color:#9090a8;white-space:pre;z-index:61;overflow:hidden;width:5px">2</div><div style="position:absolute;left:1910px;top:922px;height:14px;font-family:'Liberation Sans', sans-serif;font-size:11px;font-weight:400;line-height:14px;color:#9090a8;white-space:pre;z-index:61;overflow:hidden;width:5px">3</div><div style="position:absolute;left:1910px;top:942px;height:14px;font-family:'Liberation Sans', sans-serif;font-size:11px;font-weight:400;line-height:14px;color:#9090a8;white-space:pre;z-index:61;overflow:hidden;width:5px">4</div><div style="position:absolute;left:1910px;top:962px;height:14px;font-family:'Liberation Sans', sans-serif;font-size:11px;font-weight:400;line-height:14px;color:#9090a8;white-space:pre;z-index:61;overflow:hidden;width:5px">5</div><div style="position:absolute;left:1910px;top:982px;height:14px;font-family:'Liberation Sans', sans-serif;font-size:11px;font-weight:400;line-height:14px;color:#9090a8;white-space:pre;z-index:61;overflow:hidden;width:5px">6</div></body></html>
